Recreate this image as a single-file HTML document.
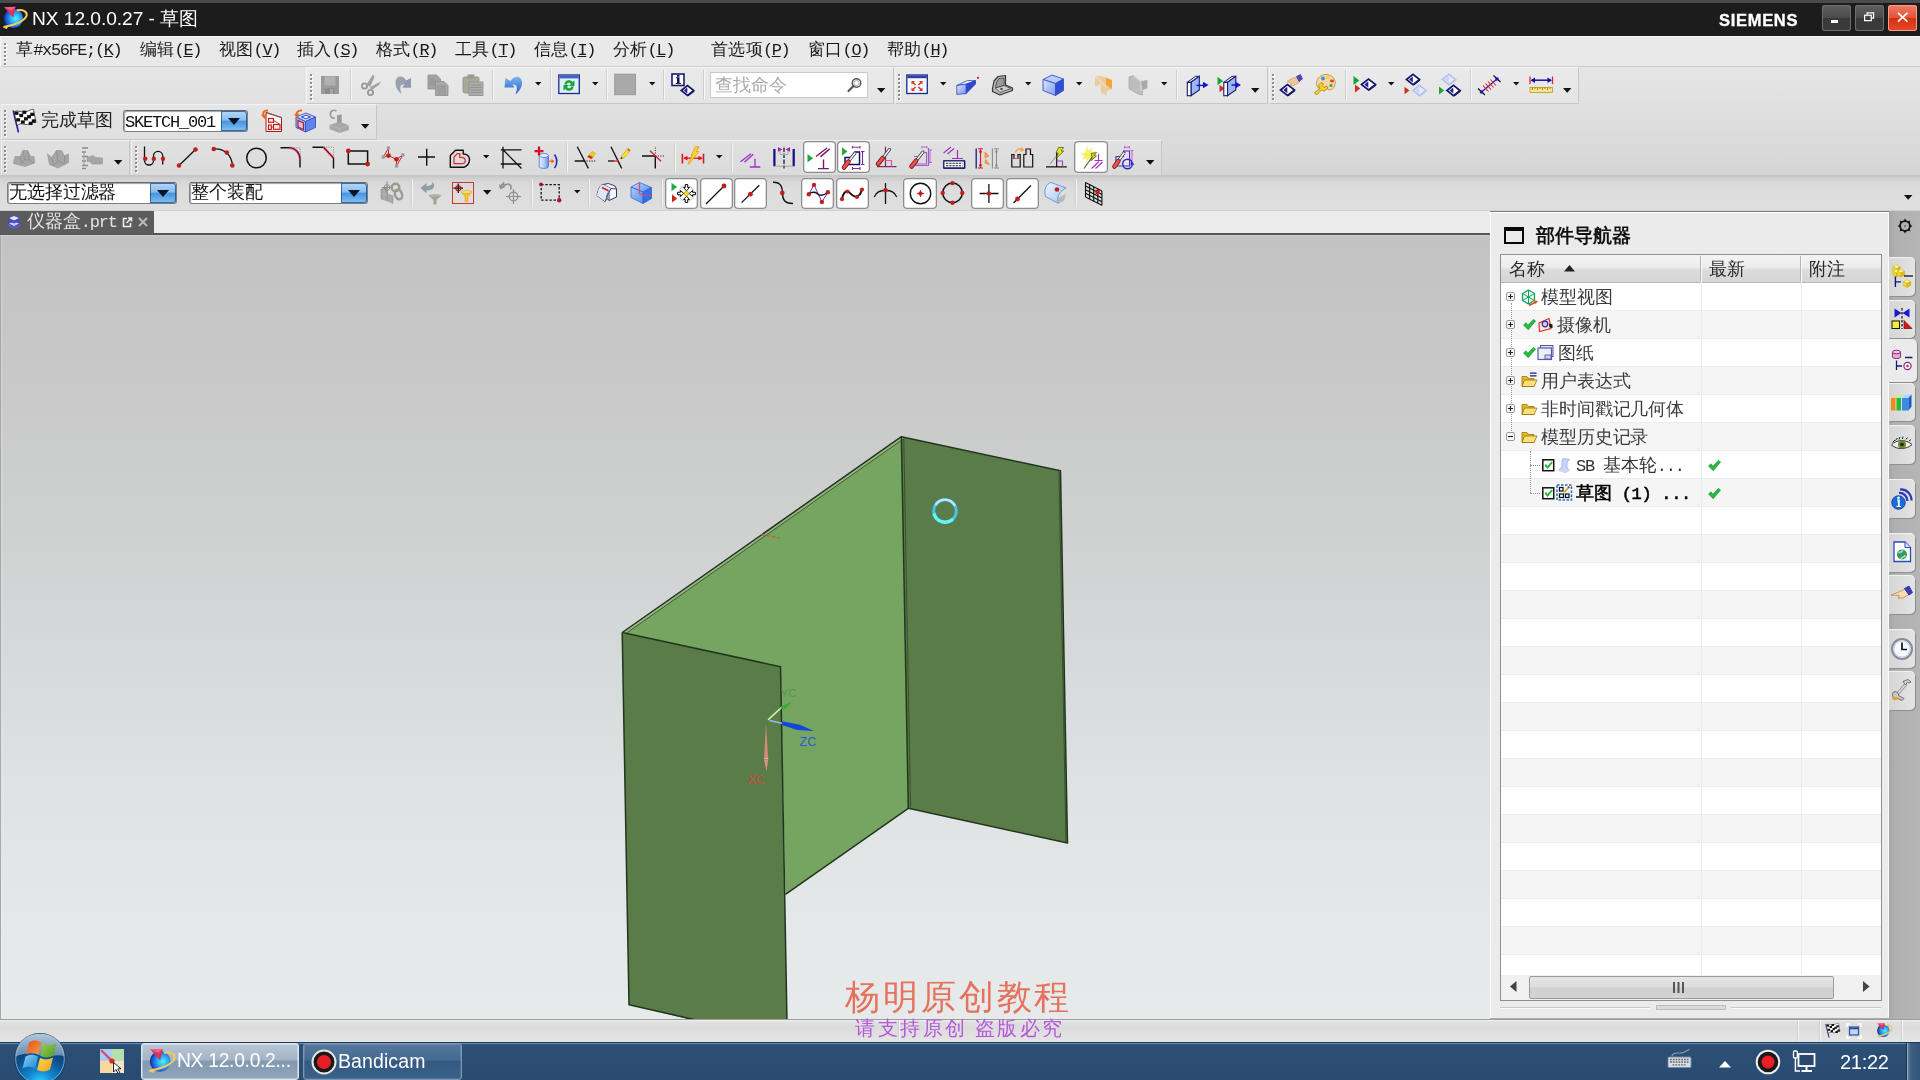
<!DOCTYPE html>
<html><head><meta charset="utf-8"><title>NX 12.0.0.27</title><style>
html,body{margin:0;padding:0}
body{width:1920px;height:1080px;overflow:hidden;position:relative;background:#e6e6e6;font-family:"Liberation Sans",sans-serif}
.b{position:absolute}
.i{position:absolute;overflow:visible}
.t{position:absolute;white-space:nowrap;font-family:"Liberation Sans",sans-serif;will-change:transform}
.a{font-family:"Liberation Mono",monospace;font-size:17px;letter-spacing:-1.2px}
.m{font-size:17.35px;letter-spacing:.3px;line-height:20px;color:#1a1a1a}
.m .a{letter-spacing:-1.4px}
.tb{background:rgba(255,255,255,.16);box-shadow:1px 1px 0 #c6c6c6,inset 1px 1px 0 rgba(255,255,255,.55)}
.tg{background:#fff;border-radius:4px;box-shadow:inset 0 0 0 1.3px #8d8d8d}
.grip{width:4px;background:repeating-linear-gradient(#8e8e8e 0 2px,transparent 2px 4.03px) 0 0/2px 100% no-repeat,repeating-linear-gradient(transparent 0 1px,#fff 1px 3px,transparent 3px 4.03px) 1px 0/2px 100% no-repeat}
.cb{background:#fff;border:1px solid #74808f;border-top-color:#5e6a78;border-radius:3px;box-sizing:border-box;box-shadow:inset 1px 1px 1px #a2a2a2}
.cbb{left:auto;border-radius:0 3px 3px 0;background:linear-gradient(#b4d8f8,#86bef0 45%,#4a94e0 52%,#6cb4ee 85%,#8cc8f6);box-shadow:inset 0 0 0 1px rgba(30,60,110,.7);box-sizing:border-box}

.nv{position:absolute;white-space:nowrap;will-change:transform;font-size:17.8px;letter-spacing:-.12px;line-height:20px;color:#3c3c3c}
</style></head><body>
<div class="b " style="left:0px;top:0px;width:1920px;height:3px;background:#4b4b4e"></div>
<div class="b " style="left:0px;top:3px;width:1920px;height:32.5px;background:#1c1c1c"></div>
<div class="b " style="left:0px;top:35.5px;width:1920px;height:31px;background:#e9e9e9"></div>
<div class="b " style="left:0px;top:66px;width:1920px;height:1px;background:#cdcdcd"></div>
<div class="b " style="left:0px;top:35.7px;width:1920px;height:1.5px;background:#fbfbfb"></div>
<div class="b " style="left:0px;top:36px;width:1px;height:175px;background:#f4f4f4"></div>
<div class="b " style="left:0px;top:67px;width:1920px;height:109px;background:linear-gradient(#e6e6e6,#d5d5d5)"></div>
<div class="b " style="left:0px;top:175px;width:1920px;height:36px;background:linear-gradient(#c0c0c0 0,#cfcfcf 8%,#d8d8d8 20%,#dcdcdc 40%,#dfdfdf 100%)"></div>
<div class="b " style="left:0px;top:210px;width:1920px;height:1px;background:#d0d0d0"></div>
<div class="b " style="left:0px;top:211px;width:1490px;height:22.5px;background:#ececec"></div>
<div class="b " style="left:0px;top:233px;width:1490px;height:1.8px;background:#565656"></div>
<div class="b " style="left:0px;top:234.8px;width:1490px;height:1.2px;background:#cdcdcd"></div>
<svg class="i" style="left:2px;top:5px" width="26" height="26" viewBox="0 0 26 26"><defs><radialGradient id="nxg" cx=".62" cy=".5" r=".62"><stop offset="0" stop-color="#4af4ff"/><stop offset=".45" stop-color="#2aa8f0"/><stop offset=".8" stop-color="#1a56d8"/><stop offset="1" stop-color="#0c2a80"/></radialGradient></defs><circle cx="11.300" cy="13.400" r="9.600" fill="url(#nxg)"/><path d="M15.500 5.200C21 4.500 25.500 6.500 24.600 10.500C23 16 12 20.500 2.500 21.800" fill="none" stroke="#f2c860" stroke-width="2.100" stroke-linecap="round"/><path d="M1.500 22.300L5.500 21.200L4.800 23.500Z" fill="#f2c860" stroke="#f2c860" stroke-width="1"/><path d="M2 2.200L13.600 1.800L11.400 12.600Z" fill="#e0305c"/><path d="M2 2.200L13.600 1.800L9.500 5.500Z" fill="#f0608a"/></svg>
<div class="t" style="left:32px;top:6.5px;color:#fff;font-size:19.2px;line-height:24px;letter-spacing:-.06px">NX 12.0.0.27 - 草图</div>
<div class="t" style="left:1718.5px;top:11.2px;color:#fff;font-size:16.5px;line-height:18px;font-weight:bold;letter-spacing:.7px;-webkit-text-stroke:.35px #fff">SIEMENS</div>
<div class="b " style="left:1822px;top:4.5px;width:29px;height:26px;background:linear-gradient(#606060,#4a4a4a 48%,#383838 52%,#3c3c3c);border-radius:3px;box-shadow:inset 0 0 0 1px #6d6d6d"></div>
<div class="b " style="left:1855px;top:4.5px;width:29px;height:26px;background:linear-gradient(#606060,#4a4a4a 48%,#383838 52%,#3c3c3c);border-radius:3px;box-shadow:inset 0 0 0 1px #6d6d6d"></div>
<div class="b " style="left:1888px;top:4.5px;width:29px;height:26px;background:linear-gradient(#ee7d63,#e2543a 48%,#d9310f 52%,#e24a2a);border-radius:3px;box-shadow:inset 0 0 0 1px #f0a090"></div>
<div class="b " style="left:1831px;top:19.6px;width:7.2px;height:3.8px;background:#fff"></div>
<svg class="i" style="left:1863.8px;top:12.2px" width="10.5" height="9.6" viewBox="0 0 12 11"><path d="M3.5 3.5V1H11V7H8.5" fill="none" stroke="#fff" stroke-width="1.3"/><rect x="0.7" y="3.7" width="7.6" height="6.2" fill="none" stroke="#fff" stroke-width="1.4"/></svg>
<svg class="i" style="left:1896.8px;top:12px" width="11.4" height="10.4" viewBox="0 0 13 12"><path d="M1 1L12 11M12 1L1 11" stroke="#fff" stroke-width="2"/></svg>
<div class="b grip" style="left:4px;top:42.8px;height:23.18px"></div>
<div class="t m" style="left:16px;top:39.4px;">草<span class="a">#x56FE;(</span><span class="a"><u>K</u></span><span class="a">)</span></div>
<div class="t m" style="left:140px;top:39.4px;">编辑<span class="a">(</span><span class="a"><u>E</u></span><span class="a">)</span></div>
<div class="t m" style="left:218.5px;top:39.4px;">视图<span class="a">(</span><span class="a"><u>V</u></span><span class="a">)</span></div>
<div class="t m" style="left:297px;top:39.4px;">插入<span class="a">(</span><span class="a"><u>S</u></span><span class="a">)</span></div>
<div class="t m" style="left:376px;top:39.4px;">格式<span class="a">(</span><span class="a"><u>R</u></span><span class="a">)</span></div>
<div class="t m" style="left:455px;top:39.4px;">工具<span class="a">(</span><span class="a"><u>T</u></span><span class="a">)</span></div>
<div class="t m" style="left:534px;top:39.4px;">信息<span class="a">(</span><span class="a"><u>I</u></span><span class="a">)</span></div>
<div class="t m" style="left:613px;top:39.4px;">分析<span class="a">(</span><span class="a"><u>L</u></span><span class="a">)</span></div>
<div class="t m" style="left:711px;top:39.4px;">首选项<span class="a">(</span><span class="a"><u>P</u></span><span class="a">)</span></div>
<div class="t m" style="left:808px;top:39.4px;">窗口<span class="a">(</span><span class="a"><u>O</u></span><span class="a">)</span></div>
<div class="t m" style="left:887px;top:39.4px;">帮助<span class="a">(</span><span class="a"><u>H</u></span><span class="a">)</span></div>
<div class="b tb" style="left:306px;top:67px;width:587px;height:36px;"></div>
<div class="b grip" style="left:310px;top:73.9px;height:27.21px"></div>
<svg class="i" style="left:318px;top:73px" width="24" height="24" viewBox="0 0 24 24"><rect x="3" y="3" width="18" height="18" fill="#9a9a9a"/><rect x="6.5" y="3.5" width="11" height="9" fill="#b1b1b1"/><rect x="7" y="15" width="9.5" height="6" fill="#8c8c8c"/><rect x="12" y="16" width="3" height="5" fill="#a5a5a5"/></svg>
<div class="b " style="left:350px;top:70px;width:1px;height:30px;background:#cecece"></div>
<div class="b " style="left:351px;top:70px;width:1px;height:30px;background:#f6f6f6"></div>
<svg class="i" style="left:358px;top:73px" width="24" height="24" viewBox="0 0 24 24"><circle cx="6.5" cy="13" r="2.6" fill="none" stroke="#979797" stroke-width="1.8"/><circle cx="12.5" cy="19.5" r="2.6" fill="none" stroke="#979797" stroke-width="1.8"/><path d="M8.5 11.5L15 1.5L16.5 4L12 14Z" fill="#a2a2a2"/><path d="M13 17.5L12 14L23 8.5L21 12Z" fill="#a2a2a2"/></svg>
<svg class="i" style="left:392px;top:73px" width="24" height="24" viewBox="0 0 24 24"><path d="M14.5 7.5C10 1 4 3 3.5 9C3 14 6.500 18.500 9.500 21C8 16 7 11 12.500 11.500L10.500 14.500L19 14.500L19 5Z" fill="#9aa0ac"/><path d="M12.500 11.500L10.500 14.500L19 14.500L19 5L14.500 7.500Z" fill="#8f98b5"/></svg>
<svg class="i" style="left:426px;top:73px" width="24" height="24" viewBox="0 0 24 24"><path d="M2 2H10.500L14.500 6V16H2Z" fill="#a3a3a3" stroke="#8e8e8e" stroke-width=".8"/><path d="M9.500 8.500H18L22 12.500V22.500H9.500Z" fill="#a9a9a9" stroke="#8e8e8e" stroke-width=".8"/><path d="M11 13H20M11 15H20M11 17H20M11 19H20M11 21H20M3.500 6H9M3.500 8H9M3.500 10H9M3.500 12H9" stroke="#8d8d8d" stroke-width=".8"/></svg>
<svg class="i" style="left:460.5px;top:73px" width="24" height="24" viewBox="0 0 24 24"><rect x="2" y="4" width="16" height="16" rx="1.500" fill="#a8a996" stroke="#919181" stroke-width=".8"/><rect x="6.500" y="1.500" width="7" height="4" fill="#9a9a9a"/><rect x="8" y="9" width="14" height="13.500" fill="#adadad" stroke="#8e8e8e" stroke-width=".8"/><path d="M9.500 12H20.500M9.500 14.500H20.500M9.500 17H20.500M9.500 19.500H20.500" stroke="#8d8d8d" stroke-width=".9"/></svg>
<div class="b " style="left:492px;top:70px;width:1px;height:30px;background:#cecece"></div>
<div class="b " style="left:493px;top:70px;width:1px;height:30px;background:#f6f6f6"></div>
<svg class="i" style="left:500.5px;top:73px" width="24" height="24" viewBox="0 0 24 24"><defs><linearGradient id="ug" x1="0" y1="0" x2="0" y2="1"><stop offset="0" stop-color="#7db4f2"/><stop offset="1" stop-color="#1f5fc2"/></linearGradient></defs><path d="M9.500 8C14 1.500 20.500 3 21 9C21.500 14 18 18.500 14.500 21.500C16 16.500 17.500 11.500 11.500 11.500L13.500 14.500H3.500L4.500 5Z" fill="url(#ug)"/></svg>
<svg class="i" style="left:535.3px;top:82.2px" width="7" height="4" viewBox="0 0 7 4"><path d="M0 0H6.400L3.200 3.600Z" fill="#111"/></svg>
<div class="b " style="left:550px;top:70px;width:1px;height:30px;background:#cecece"></div>
<div class="b " style="left:551px;top:70px;width:1px;height:30px;background:#f6f6f6"></div>
<svg class="i" style="left:556.5px;top:73px" width="24" height="24" viewBox="0 0 24 24"><rect x="1.800" y="2" width="20.500" height="18.500" fill="#dff0fb" stroke="#1c2a90" stroke-width="1.300"/><rect x="2.400" y="2.600" width="19.300" height="2.800" fill="#3f62c8"/><path d="M7.500 11.500C7.500 6.500 14 6 15.500 9L17.500 7.500V13H12L14 11C12.500 9 9.800 9.500 10 11.500Z" fill="#19a534"/><path d="M16.500 13.500C16.500 18.500 10 19 8.500 16L6.500 17.500V12H12L10 14C11.500 16 14.200 15.500 14 13.500Z" fill="#19a534"/></svg>
<svg class="i" style="left:591.8px;top:82.2px" width="7" height="4" viewBox="0 0 7 4"><path d="M0 0H6.400L3.200 3.600Z" fill="#111"/></svg>
<div class="b " style="left:606px;top:70px;width:1px;height:30px;background:#cecece"></div>
<div class="b " style="left:607px;top:70px;width:1px;height:30px;background:#f6f6f6"></div>
<svg class="i" style="left:613px;top:73px" width="24" height="24" viewBox="0 0 24 24"><rect x="1.700" y="1.200" width="20.800" height="20.500" fill="#a9a9a9" stroke="#9a9a9a" stroke-width="1"/></svg>
<svg class="i" style="left:649.3px;top:82.2px" width="7" height="4" viewBox="0 0 7 4"><path d="M0 0H6.400L3.200 3.600Z" fill="#111"/></svg>
<div class="b " style="left:663px;top:70px;width:1px;height:30px;background:#cecece"></div>
<div class="b " style="left:664px;top:70px;width:1px;height:30px;background:#f6f6f6"></div>
<svg class="i" style="left:670.5px;top:73px" width="24" height="24" viewBox="0 0 24 24"><rect x="1" y="1" width="12" height="11.500" fill="#fff" stroke="#1a1a6e" stroke-width="1.600"/><path d="M5 4.300H8.500V10H9.800V11H4.800V10H6V5.300H5Z" fill="#101060"/><rect x="6" y="2" width="2.500" height="1.700" fill="#101060"/><path d="M11.2 18.4L17.4 13.564L23.6 18.4L17.4 23.236Z" fill="#15156a"/><path d="M10.3 17.5L16.5 12.664L22.7 17.5L16.5 22.336Z" fill="#ffffff" stroke="#15156a" stroke-width="1.700"/><path d="M12.78 17.5L16.3 14.5984L16.3 20.4016Z" fill="#23238e"/></svg>
<div class="b " style="left:703px;top:70px;width:1px;height:30px;background:#cecece"></div>
<div class="b " style="left:704px;top:70px;width:1px;height:30px;background:#f6f6f6"></div>
<div class="b " style="left:710px;top:72px;width:158px;height:25.5px;background:#fff;border:1px solid #c9c9c9;box-sizing:border-box"></div>
<div class="t" style="left:715px;top:75.5px;color:#aaa;font-size:17.8px;letter-spacing:-.12px;line-height:19px">查找命令</div>
<svg class="i" style="left:847px;top:76.5px" width="16" height="16" viewBox="0 0 16 16"><circle cx="9.500" cy="6" r="4.300" fill="none" stroke="#555" stroke-width="1.400"/><circle cx="9.500" cy="6" r="2.600" fill="none" stroke="#999" stroke-width=".8"/><path d="M6.500 9L1.500 14" stroke="#555" stroke-width="2.200" stroke-linecap="round"/></svg>
<svg class="i" style="left:876.8px;top:87.9px" width="8.4" height="4.700" viewBox="0 0 9 5"><path d="M0 0H9L4.500 5Z" fill="#111"/></svg>
<div class="b tb" style="left:895px;top:67px;width:372px;height:36px;"></div>
<div class="b grip" style="left:898px;top:73.9px;height:27.21px"></div>
<svg class="i" style="left:904.5px;top:73px" width="24" height="24" viewBox="0 0 24 24"><rect x="1.800" y="2" width="20.500" height="18.500" fill="#f4f7ff" stroke="#1c2a90" stroke-width="1.300"/><rect x="2.400" y="2.600" width="19.300" height="2.600" fill="#2c3f9c"/><path d="M6.500 8H10L6.500 11.500Z M17.500 8H14L17.500 11.500Z M6.500 18H10L6.500 14.500Z M17.500 18H14L17.500 14.500Z" fill="#d33a1a"/><path d="M7.500 9L10.500 12M16.500 9L13.500 12M7.500 17L10.500 14M16.500 17L13.500 14" stroke="#d33a1a" stroke-width="1.500"/></svg>
<svg class="i" style="left:939.8px;top:82.2px" width="7" height="4" viewBox="0 0 7 4"><path d="M0 0H6.400L3.200 3.600Z" fill="#111"/></svg>
<svg class="i" style="left:954px;top:73px" width="24" height="24" viewBox="0 0 24 24"><defs><linearGradient id="bb" x1="0" y1="0" x2="1" y2="1"><stop offset="0" stop-color="#e4ecff"/><stop offset="1" stop-color="#6f8ff0"/></linearGradient></defs><path d="M2.800 12.500L13.500 7.500L21.500 7.700L12.100 11.200Z" fill="#eef3ff" stroke="#2c45b8" stroke-width=".8" stroke-linejoin="round"/><path d="M12.100 11.200L21.500 7.700V11L12.100 20.600Z" fill="#2f43d4" stroke="#2c45b8" stroke-width=".8" stroke-linejoin="round"/><path d="M2.800 12.500L12.100 11.200V20.600L2.800 21.400Z" fill="url(#bb)" stroke="#2c45b8" stroke-width=".8" stroke-linejoin="round"/><circle cx="24" cy="4.8" r="1.1" fill="#c01818"/></svg>
<svg class="i" style="left:989.5px;top:73px" width="24" height="24" viewBox="0 0 24 24"><path d="M2.500 15.500L4 8L8 3.500L15.500 2.500V12L22.500 15V17.500L10 22L2.500 18.500Z" fill="#b9b9b9" stroke="#333" stroke-width="1.200" stroke-linejoin="round"/><path d="M5.500 15L6.500 9L9 5.500L14 5V12.500Z" fill="#9b9b9b" stroke="#444" stroke-width=".8"/><path d="M5.500 15L14 12.500L21 15.500L10 19.500Z" fill="#d0d0d0" stroke="#444" stroke-width=".8"/><circle cx="11.500" cy="16" r="1.300" fill="#555"/></svg>
<svg class="i" style="left:1025.3px;top:82.2px" width="7" height="4" viewBox="0 0 7 4"><path d="M0 0H6.400L3.200 3.600Z" fill="#111"/></svg>
<svg class="i" style="left:1041px;top:73px" width="24" height="24" viewBox="0 0 24 24"><defs><linearGradient id="cu" x1="0" y1="0" x2="1" y2="1"><stop offset="0" stop-color="#dbe6ff"/><stop offset="1" stop-color="#7d9cf0"/></linearGradient></defs><path d="M2 6.500L11 2L22.500 6L14.500 10.500Z" fill="#b9ccff" stroke="#3452c8" stroke-width=".9"/><path d="M2 6.500L14.500 10.500V22.500L2 17.500Z" fill="url(#cu)" stroke="#3452c8" stroke-width=".9"/><path d="M14.500 10.500L22.500 6V17.500L14.500 22.500Z" fill="#2f4fd0" stroke="#3452c8" stroke-width=".9"/></svg>
<svg class="i" style="left:1075.8px;top:82.2px" width="7" height="4" viewBox="0 0 7 4"><path d="M0 0H6.400L3.200 3.600Z" fill="#111"/></svg>
<svg class="i" style="left:1092px;top:73px" width="24" height="24" viewBox="0 0 24 24"><path d="M3 4L8 2.500L20 7V16L14.500 18V22L9 20V11L3 13.500Z" fill="#f0c890" opacity=".9"/><path d="M8 2.500L20 7V16L14 12V5Z" fill="#f5a436"/><path d="M3 13.500L9 11V20L14.500 22V18" fill="none" stroke="#d9d9d9" stroke-width="1"/><path d="M4 4L14 14" stroke="#e6e0d0" stroke-width="1.200"/></svg>
<svg class="i" style="left:1126px;top:73px" width="24" height="24" viewBox="0 0 24 24"><path d="M3 4L7.500 2.500L15 8.500L21 7.500V15L16.500 16.500V22L12 21L3 15.500Z" fill="#bdbdbd" stroke="#a8a8a8" stroke-width=".8"/><path d="M7.500 2.500L15 8.500V18" fill="none" stroke="#dcdcdc" stroke-width="1.200"/><path d="M15 8.500L21 7.500V15L16.500 16.500Z" fill="#a9a9a9"/></svg>
<svg class="i" style="left:1160.8px;top:82.2px" width="7" height="4" viewBox="0 0 7 4"><path d="M0 0H6.400L3.200 3.600Z" fill="#111"/></svg>
<div class="b " style="left:1176px;top:70px;width:1px;height:30px;background:#cecece"></div>
<div class="b " style="left:1177px;top:70px;width:1px;height:30px;background:#f6f6f6"></div>
<svg class="i" style="left:1185px;top:73px" width="24" height="24" viewBox="0 0 24 24"><path d="M2.3 9.300L10.5 3.300H14.3L6 9.300Z" fill="#e8eefc" stroke="#1a1a6e" stroke-width="1"/><path d="M6 9.300L14.3 3.300V17L6 22.700Z" fill="#9db8f4" stroke="#1a1a6e" stroke-width="1.100"/><rect x="2.3" y="9.300" width="3.700" height="13.400" fill="#fff" stroke="#1a1a6e" stroke-width="1.100"/><path d="M11.500 12.400H20" stroke="#1515c8" stroke-width="1.500"/><path d="M18 8.800L23.500 12L18 15.200Z" fill="#1515c8"/></svg>
<svg class="i" style="left:1217px;top:73px" width="24" height="24" viewBox="0 0 24 24"><path d="M0.5 3.7L6.09 8L0.5 12.3Z" fill="#19a534"/><path d="M2.5 11.7L7.44 15.5L2.5 19.3Z" fill="#c8301c"/><path d="M6.8 9.300L15 3.300H18.8L10.5 9.300Z" fill="#e8eefc" stroke="#1a1a6e" stroke-width="1"/><path d="M10.5 9.300L18.8 3.300V17L10.5 22.700Z" fill="#9db8f4" stroke="#1a1a6e" stroke-width="1.100"/><rect x="6.8" y="9.300" width="3.700" height="13.400" fill="#fff" stroke="#1a1a6e" stroke-width="1.100"/><path d="M14.500 12H20" stroke="#1515c8" stroke-width="1.500"/><path d="M18.500 8.800L24 12L18.500 15.200Z" fill="#1515c8"/></svg>
<svg class="i" style="left:1251.3px;top:87.9px" width="8.4" height="4.700" viewBox="0 0 9 5"><path d="M0 0H9L4.500 5Z" fill="#111"/></svg>
<div class="b tb" style="left:1269px;top:67px;width:309px;height:36px;"></div>
<div class="b grip" style="left:1272px;top:73.9px;height:27.21px"></div>
<svg class="i" style="left:1279px;top:73px" width="24" height="24" viewBox="0 0 24 24"><path d="M8 8.500L14 5L18 4L20.500 9L15 12.500L11 12L12.500 10Z" fill="#f0c89c" stroke="#c89a64" stroke-width=".7"/><path d="M17.500 3.500L21.500 1.500L23.500 6L20 8.500Z" fill="#4a46c8" stroke="#2a2890" stroke-width=".6"/><path d="M2.4 17.9L9.4 12.44L16.4 17.9L9.4 23.36Z" fill="#15156a"/><path d="M1.5 17L8.5 11.54L15.5 17L8.5 22.46Z" fill="#ffffff" stroke="#15156a" stroke-width="1.700"/><path d="M4.3 17L8.3 13.724L8.3 20.276Z" fill="#23238e"/></svg>
<svg class="i" style="left:1312px;top:73px" width="24" height="24" viewBox="0 0 24 24"><path d="M12.500 1.500C20 1 24 6 23 11.500C22 17 17 18 15 15.500C13 13.500 11 16 8 15.500C2 14.500 3.500 3 12.500 1.500Z" fill="#f1d6a8" stroke="#c79a52" stroke-width="1"/><circle cx="11" cy="5.500" r="1.900" fill="#3f8fe0"/><circle cx="16" cy="4.500" r="1.700" fill="#f5d820"/><ellipse cx="20" cy="8" rx="2" ry="1.400" fill="#e0481c"/><circle cx="19" cy="12.500" r="1.600" fill="#32b040"/><path d="M2.500 19.500L8 15.500L6.500 12L10 9.500L11.500 11L10 12.500L12 14.500L14.500 13L16 15L12.500 18L9.500 17L4.500 22Z" fill="#f6d32c" stroke="#b8860b" stroke-width=".9"/></svg>
<div class="b " style="left:1345px;top:70px;width:1px;height:30px;background:#cecece"></div>
<div class="b " style="left:1346px;top:70px;width:1px;height:30px;background:#f6f6f6"></div>
<svg class="i" style="left:1352px;top:73px" width="24" height="24" viewBox="0 0 24 24"><path d="M1.5 3L7.35 7.5L1.5 12Z" fill="#19a534"/><path d="M3 11.5L8.2 15.5L3 19.5Z" fill="#c8301c"/><path d="M10.4 12.4L17.4 6.94L24.4 12.4L17.4 17.86Z" fill="#15156a"/><path d="M9.5 11.5L16.5 6.04L23.5 11.5L16.5 16.96Z" fill="#ffffff" stroke="#15156a" stroke-width="1.700"/><path d="M12.3 11.5L16.3 8.224L16.3 14.776Z" fill="#23238e"/></svg>
<svg class="i" style="left:1388.3px;top:82.2px" width="7" height="4" viewBox="0 0 7 4"><path d="M0 0H6.400L3.200 3.600Z" fill="#111"/></svg>
<svg class="i" style="left:1403px;top:73px" width="24" height="24" viewBox="0 0 24 24"><path d="M4.4 7.4L10.9 2.33L17.4 7.4L10.9 12.47Z" fill="#15156a"/><path d="M3.5 6.5L10 1.43L16.5 6.5L10 11.57Z" fill="#ffffff" stroke="#15156a" stroke-width="1.700"/><path d="M6.1 6.5L9.8 3.458L9.8 9.542Z" fill="#23238e"/><path d="M1.5 13.7L6.44 17.5L1.5 21.3Z" fill="#c8301c"/><path d="M10.9 18.4L17.4 13.33L23.9 18.4L17.4 23.47Z" fill="#c9d4f6"/><path d="M10 17.5L16.5 12.43L23 17.5L16.5 22.57Z" fill="#e6ecfd" stroke="#b4c2f0" stroke-width="1.700"/><path d="M12.6 17.5L16.3 14.458L16.3 20.542Z" fill="#c3d0f6"/></svg>
<svg class="i" style="left:1438px;top:73px" width="24" height="24" viewBox="0 0 24 24"><path d="M5.4 7.4L11.9 2.33L18.4 7.4L11.9 12.47Z" fill="#c9d4f6"/><path d="M4.5 6.5L11 1.43L17.5 6.5L11 11.57Z" fill="#e6ecfd" stroke="#b4c2f0" stroke-width="1.700"/><path d="M7.1 6.5L10.8 3.458L10.8 9.542Z" fill="#c3d0f6"/><path d="M1 13.5L6.2 17.5L1 21.5Z" fill="#19a534"/><path d="M9.9 18.4L16.4 13.33L22.9 18.4L16.4 23.47Z" fill="#15156a"/><path d="M9 17.5L15.5 12.43L22 17.5L15.5 22.57Z" fill="#ffffff" stroke="#15156a" stroke-width="1.700"/><path d="M11.6 17.5L15.3 14.458L15.3 20.542Z" fill="#23238e"/></svg>
<div class="b " style="left:1470px;top:70px;width:1px;height:30px;background:#cecece"></div>
<div class="b " style="left:1471px;top:70px;width:1px;height:30px;background:#f6f6f6"></div>
<svg class="i" style="left:1477px;top:73px" width="24" height="24" viewBox="0 0 24 24"><path d="M1 15.500L8 22M16.500 2.500L23.500 9" stroke="#111" stroke-width="1.200"/><path d="M4.500 19L20 6" stroke="#1a1ac0" stroke-width="1.200"/><path d="M6 12.500L11.500 18.500M8.500 10.500L14 16.500M11 8.500L16.500 14.500M13.500 6.500L19 12.500" stroke="#e02020" stroke-width="1.100"/><circle cx="4.5" cy="19" r="1.8" fill="#1a1ac0"/><circle cx="20" cy="6" r="1.8" fill="#1a1ac0"/></svg>
<svg class="i" style="left:1513.3px;top:82.2px" width="7" height="4" viewBox="0 0 7 4"><path d="M0 0H6.400L3.200 3.600Z" fill="#111"/></svg>
<svg class="i" style="left:1528.5px;top:73px" width="24" height="24" viewBox="0 0 24 24"><path d="M1 3.500V11M23.500 3.500V11" stroke="#e0203a" stroke-width="1.300"/><path d="M3 7.200H21.500" stroke="#10109a" stroke-width="1.500"/><path d="M1.500 7.200L6 4.500V10ZM23 7.200L18.500 4.500V10Z" fill="#10109a"/><rect x="1" y="14.500" width="22.500" height="5" fill="#f5e58a" stroke="#b89a20" stroke-width=".8"/><path d="M3.500 14.500V17M6 14.500V16M8.500 14.500V17M11 14.500V16M13.500 14.500V17M16 14.500V16M18.500 14.500V17M21 14.500V16" stroke="#8a7010" stroke-width=".8"/></svg>
<svg class="i" style="left:1563.3px;top:87.9px" width="8.4" height="4.700" viewBox="0 0 9 5"><path d="M0 0H9L4.500 5Z" fill="#111"/></svg>
<div class="b tb" style="left:1px;top:104px;width:375px;height:35px;"></div>
<div class="b grip" style="left:4.4px;top:109.6px;height:27.21px"></div>
<svg class="i" style="left:11.5px;top:109px" width="24" height="24" viewBox="0 0 24 24"><path d="M1.200 1.500L6.500 23.500" stroke="#2a2aa0" stroke-width="1.700"/><path d="M2 3C6 .2 10 4.500 15 2.500S20 0 21.500 .5L24 13.500C21 12.500 19 15 15.500 15.500S9 13 5.200 16.500Z" fill="#fff" stroke="#111" stroke-width=".7"/><rect x="2.6" y="2.6" width="3.900" height="3.300" fill="#111"/><rect x="10.4" y="1.6" width="3.900" height="3.300" fill="#111"/><rect x="18.2" y="3.7" width="3.900" height="3.300" fill="#111"/><rect x="7.3" y="4.8" width="3.900" height="3.300" fill="#111"/><rect x="15.1" y="6.1" width="3.900" height="3.300" fill="#111"/><rect x="4.2" y="9.2" width="3.900" height="3.300" fill="#111"/><rect x="12.0" y="8.2" width="3.900" height="3.300" fill="#111"/><rect x="19.8" y="10.3" width="3.900" height="3.300" fill="#111"/><rect x="8.9" y="11.4" width="3.900" height="3.300" fill="#111"/><rect x="16.7" y="12.7" width="3.900" height="3.300" fill="#111"/></svg>
<div class="t" style="left:40.5px;top:109.7px;font-size:17.8px;letter-spacing:-.12px;line-height:20px;color:#222">完成草图</div>
<div class="b cb" style="left:123px;top:109.5px;width:124.5px;height:22.5px;"></div>
<div class="b cbb" style="left:220.5px;top:110.5px;width:26px;height:20.5px;"></div>
<svg class="i" style="left:227.5px;top:117.75px" width="12" height="7" viewBox="0 0 12 7"><path d="M0 0H12L6 7Z" fill="#0a1422"/></svg>
<div class="t" style="left:125px;top:111.5px;font-size:17.8px;letter-spacing:-.12px;line-height:19px;color:#111"><span class="a">SKETCH_001</span></div>
<svg class="i" style="left:260px;top:109px" width="24" height="24" viewBox="0 0 24 24"><path d="M6 3.500L21.500 8.500V22.500H6Z" fill="#f6f6f6" stroke="#b01818" stroke-width="1"/><path d="M6 3.500L21.500 8.500" stroke="#555" stroke-width=".8" fill="none"/><rect x="8.500" y="9.500" width="5" height="3.800" fill="#fbe4e4" stroke="#c01818" stroke-width="1.100"/><rect x="8.500" y="16" width="2.800" height="4.500" fill="#fbe4e4" stroke="#c01818" stroke-width="1.100"/><rect x="13.500" y="15.500" width="6.500" height="4.800" fill="#fbe4e4" stroke="#c01818" stroke-width="1.100"/><path d="M13.500 11.500L20 15.500M11.300 18H13.500" stroke="#c01818" stroke-width=".9" fill="none"/><path d="M8 1.500C4.500 1 2 3.500 3.500 7" fill="none" stroke="#ee6a1a" stroke-width="2"/><path d="M1 6L5 10.500L7 5.500Z" fill="#ee6a1a"/></svg>
<svg class="i" style="left:293px;top:109px" width="24" height="24" viewBox="0 0 24 24"><path d="M3 8L13 4L22.500 8L12.500 12.500Z" fill="#c8d8ff" stroke="#3452c8" stroke-width=".9"/><path d="M3 8L12.500 12.500V23L3 18.500Z" fill="#9ab6f8" stroke="#3452c8" stroke-width=".9"/><path d="M12.500 12.500L22.500 8V18.500L12.500 23Z" fill="#5f84ee" stroke="#3452c8" stroke-width=".9"/><path d="M5 11.500L10.500 14V20.500L5 18Z" fill="#c9c2f4" stroke="#c81818" stroke-width="1.200"/><path d="M8.500 8L13 6.300L17.500 8L13 9.800Z" fill="#fff" stroke="#2a2ab0" stroke-width=".9"/><path d="M9 1.500C5.500 1 2.500 3.500 3.500 6.500" fill="none" stroke="#ee6a1a" stroke-width="2"/><path d="M1 5.500L4.500 9.500L6.500 4.500Z" fill="#ee6a1a"/></svg>
<svg class="i" style="left:325.5px;top:109px" width="24" height="24" viewBox="0 0 24 24"><path d="M3.500 16L11 13.500V6.500L15.500 5.500V13.500L19 14.500L23 17V21L13.500 24L3.500 20Z" fill="#a8a8a8"/><path d="M11 6.500L15.500 5.500V13.500L11 13.500Z" fill="#9a9a9a"/><path d="M3.500 16L13.500 19.500L23 17M13.500 19.500V24" fill="none" stroke="#bdbdbd" stroke-width=".8"/><path d="M10.500 2C7 0 3.500 2.500 4.500 6.500C5 8.500 7 9.500 9 9" fill="none" stroke="#9c9c9c" stroke-width="1.700"/></svg>
<svg class="i" style="left:361.3px;top:123.9px" width="8.4" height="4.700" viewBox="0 0 9 5"><path d="M0 0H9L4.500 5Z" fill="#111"/></svg>
<div class="b tb" style="left:1px;top:140px;width:128px;height:35px;"></div>
<div class="b grip" style="left:4.4px;top:146px;height:27.21px"></div>
<svg class="i" style="left:12px;top:145.5px" width="24" height="24" viewBox="0 0 24 24"><path d="M1.500 17.500L3 10.500H8L11 4.500H15.500L18.500 10.500H22L22.500 17L13 20.500Z" fill="#a6a6a6" stroke="#979797" stroke-width=".7"/><path d="M8 10.500L10 17.500M15.500 4.500L17 14M11 4.500L12.500 13.500L10 17.500M12.500 13.500L17 14L22.500 17" fill="none" stroke="#8e8e8e" stroke-width=".8"/></svg>
<svg class="i" style="left:46px;top:145.5px" width="24" height="24" viewBox="0 0 24 24"><path d="M1.500 8L5.500 11.500L10.500 4.500H15.500L18.500 10L22.500 8V16.500L12 22L3.500 18.500Z" fill="#a6a6a6" stroke="#979797" stroke-width=".7"/><path d="M5.500 11.500L7.500 19.500M10.500 4.500L12 15.500L7.500 19.500M12 15.500L18.500 17.500V10" fill="none" stroke="#8c8c8c" stroke-width=".8"/></svg>
<svg class="i" style="left:80px;top:145.5px" width="24" height="24" viewBox="0 0 24 24"><path d="M2 2H8M2 6H6M2 10.500H8M2 15H6M2 19.500H8M2 22.500H6" stroke="#8c8c8c" stroke-width="1.600"/><path d="M4 6V19" stroke="#a0a0a0" stroke-width="1"/><path d="M7 11.500L13 9.500L15.500 11.500L22.500 12V18H12L9.500 15.500H7Z" fill="#a6a6a6" stroke="#979797" stroke-width=".6"/></svg>
<svg class="i" style="left:113.8px;top:159.9px" width="8.4" height="4.700" viewBox="0 0 9 5"><path d="M0 0H9L4.500 5Z" fill="#111"/></svg>
<div class="b tb" style="left:131px;top:140px;width:1030px;height:35px;"></div>
<div class="b grip" style="left:135px;top:146px;height:27.21px"></div>
<svg class="i" style="left:142px;top:145.5px" width="24" height="24" viewBox="0 0 24 24"><path d="M2.500 .5V14.500A4.500 4.500 0 0 0 11.500 14.500V10A4.600 4.600 0 0 1 20.700 10V18.500" fill="none" stroke="#111" stroke-width="1.3" /><circle cx="3.2" cy="12.7" r="2.2" fill="#c0201c"/><circle cx="11.8" cy="12.7" r="2.2" fill="#c0201c"/><circle cx="21" cy="12.7" r="2.2" fill="#c0201c"/></svg>
<svg class="i" style="left:176px;top:145.5px" width="24" height="24" viewBox="0 0 24 24"><path d="M3 19.500L19.500 3.500" fill="none" stroke="#111" stroke-width="1.3" /><circle cx="3" cy="19.5" r="2.3" fill="#c0201c"/><circle cx="19.5" cy="3.5" r="2.3" fill="#c0201c"/></svg>
<svg class="i" style="left:210.5px;top:145.5px" width="24" height="24" viewBox="0 0 24 24"><path d="M2.500 3C13 2 21 9 21.500 20" fill="none" stroke="#111" stroke-width="1.3" /><circle cx="2.8" cy="3" r="2.3" fill="#c0201c"/><circle cx="15.8" cy="6.5" r="2.3" fill="#c0201c"/><circle cx="21.3" cy="19.5" r="2.3" fill="#c0201c"/></svg>
<svg class="i" style="left:244px;top:145.5px" width="24" height="24" viewBox="0 0 24 24"><circle cx="12.500" cy="12" r="9.800" fill="none" stroke="#111" stroke-width="1.500"/></svg>
<svg class="i" style="left:278.5px;top:145.5px" width="24" height="24" viewBox="0 0 24 24"><path d="M10 1.800H21V13" fill="none" stroke="#888" stroke-width="0.9" stroke-dasharray="1.200 1.200"/><path d="M1.500 1.800H10M21 13V21.500" fill="none" stroke="#111" stroke-width="1.4" /><path d="M10 1.800A11 11.200 0 0 1 21 13" fill="none" stroke="#f0708c" stroke-width="2.4" /><path d="M10 1.800A11 11.200 0 0 1 21 13" fill="none" stroke="#4a1020" stroke-width="1.1" /></svg>
<svg class="i" style="left:312px;top:145.5px" width="24" height="24" viewBox="0 0 24 24"><path d="M11.500 1.200H21.500V12" fill="none" stroke="#888" stroke-width="0.9" stroke-dasharray="1.200 1.200"/><path d="M.5 1.200H11.500M21.500 12V22.500" fill="none" stroke="#111" stroke-width="1.4" /><path d="M11.500 1.200L21.500 12" fill="none" stroke="#f0607a" stroke-width="2.4" /><path d="M11.500 1.200L21.500 12" fill="none" stroke="#5a1018" stroke-width="1.1" /></svg>
<svg class="i" style="left:346px;top:145.5px" width="24" height="24" viewBox="0 0 24 24"><rect x="2.300" y="5" width="19.300" height="13" fill="none" stroke="#111" stroke-width="1.500"/><circle cx="2.3" cy="5" r="2.4" fill="#c0201c"/><circle cx="21.6" cy="18" r="2.4" fill="#c0201c"/></svg>
<svg class="i" style="left:380.5px;top:145.5px" width="24" height="24" viewBox="0 0 24 24"><path d="M7.500 2L2.300 11L7.500 9.600ZM15.500 13.300L21.800 9L15.500 20ZM7.500 9.600L15.500 13.300" fill="none" stroke="#d82020" stroke-width="1" /><circle cx="7.5" cy="2" r="1.9" fill="#a0a0a0"/><circle cx="2.3" cy="11" r="1.9" fill="#a0a0a0"/><circle cx="21.8" cy="9" r="1.9" fill="#a0a0a0"/><circle cx="15.5" cy="20" r="1.9" fill="#a0a0a0"/><circle cx="7.5" cy="9.6" r="2.3" fill="#c0201c"/><circle cx="15.5" cy="13.3" r="2.3" fill="#c0201c"/></svg>
<svg class="i" style="left:414px;top:145.5px" width="24" height="24" viewBox="0 0 24 24"><path d="M4 11H21M12.700 2.800V19.800" fill="none" stroke="#111" stroke-width="1.4" /></svg>
<svg class="i" style="left:448px;top:145.5px" width="24" height="24" viewBox="0 0 24 24"><path d="M2.300 21.300V9.500L7.500 4.200H15.200V8C24 8 23 18.500 16 21.300Z" fill="none" stroke="#111" stroke-width="1.4" stroke-linejoin="round"/><path d="M6 17.700V11L9.300 7.700H11.800V11.500C18.500 10.500 18.500 16.500 14.500 17.700Z" fill="none" stroke="#e02828" stroke-width="1.2" /></svg>
<svg class="i" style="left:482.8px;top:155.2px" width="7" height="4" viewBox="0 0 7 4"><path d="M0 0H6.400L3.200 3.600Z" fill="#111"/></svg>
<svg class="i" style="left:498.5px;top:145.5px" width="24" height="24" viewBox="0 0 24 24"><path d="M4 .7V22.500M1.800 3.800H22.500M1.800 18H22.500M4 3.800L22.500 22.500" fill="none" stroke="#111" stroke-width="1.3" /></svg>
<svg class="i" style="left:534px;top:145.5px" width="24" height="24" viewBox="0 0 24 24"><defs><linearGradient id="cy" x1="0" y1="0" x2="1" y2="0"><stop offset="0" stop-color="#e8f1ff"/><stop offset=".5" stop-color="#b7cffa"/><stop offset="1" stop-color="#5f8be6"/></linearGradient></defs><path d="M5.200 9.500V20.500C5.200 23 14.500 23 14.500 20.500V9.500Z" fill="url(#cy)" stroke="#4a6fd0" stroke-width=".8"/><ellipse cx="9.850" cy="9.500" rx="4.650" ry="2" fill="#e4eeff" stroke="#4a6fd0" stroke-width=".8"/><path d="M.5 5.100H9.500M5 .6V9.600" stroke="#d01420" stroke-width="2.300"/><path d="M14 15.200H19" stroke="#ee6a1a" stroke-width="1.300"/><path d="M17.500 12.800L20.500 15.200L17.500 17.600Z" fill="#ee6a1a"/><path d="M20.500 8.500C23.500 13 23.500 18 20.500 22" fill="none" stroke="#2a2ab8" stroke-width="1.600"/></svg>
<div class="b " style="left:566px;top:143px;width:1px;height:29px;background:#cecece"></div>
<div class="b " style="left:567px;top:143px;width:1px;height:29px;background:#f6f6f6"></div>
<svg class="i" style="left:572.5px;top:145.5px" width="24" height="24" viewBox="0 0 24 24"><path d="M4.300 .7L15.400 22.400M1.700 15H11" fill="none" stroke="#111" stroke-width="1.3" /><path d="M11 15H22.500" fill="none" stroke="#111" stroke-width="1.2" stroke-dasharray="1.200 1.300"/><path d="M14.500 11L19 5.500L22.500 7.500L18.500 13Z" fill="#f2d21a" stroke="#c89a10" stroke-width=".6"/><path d="M14.500 11L16 9L20 11L18.500 13Z" fill="#d8301c"/></svg>
<svg class="i" style="left:607px;top:145.5px" width="24" height="24" viewBox="0 0 24 24"><path d="M4 .7L14.700 22.400" fill="none" stroke="#111" stroke-width="1.3" /><path d="M1 15H7" fill="none" stroke="#111" stroke-width="1.3" /><path d="M6 15H11.500" fill="none" stroke="#e02020" stroke-width="1.3" /><path d="M13.500 13L15 9.500L20 3.500L22.500 5.500L17.500 11.500Z" fill="#f5e23a" stroke="#b89a10" stroke-width=".6"/><path d="M20 3.500L21.200 2.300L23.500 4.300L22.500 5.500Z" fill="#e0501c"/><path d="M13.500 13L14.300 11L15.800 12.200Z" fill="#111"/></svg>
<svg class="i" style="left:641px;top:145.5px" width="24" height="24" viewBox="0 0 24 24"><path d="M14.300 10V.7M14.300 10H23" fill="none" stroke="#222" stroke-width="1.1" stroke-dasharray="1.100 1.400"/><path d="M1 10H14.300V22.400" fill="none" stroke="#111" stroke-width="1.4" /><path d="M9 4.700L20 15.300" fill="none" stroke="#d8203c" stroke-width="1.3" /></svg>
<div class="b " style="left:674px;top:143px;width:1px;height:29px;background:#cecece"></div>
<div class="b " style="left:675px;top:143px;width:1px;height:29px;background:#f6f6f6"></div>
<svg class="i" style="left:681px;top:145.5px" width="24" height="24" viewBox="0 0 24 24"><path d="M1.400 7.800V17.400M22.500 7.800V17.400" fill="none" stroke="#d81818" stroke-width="1.6" /><path d="M3 12.200H21" fill="none" stroke="#d81818" stroke-width="1.3" /><path d="M2.200 12.200L6.500 9.800V14.600ZM21.700 12.200L17.400 9.800V14.600Z" fill="#d81818"/><path d="M14.500 .7H18L15.500 5.500H18L8 18L6.700 18L11.500 9.300H10Z" fill="#f7d626" stroke="#ee8a1a" stroke-width=".7"/></svg>
<svg class="i" style="left:716.3px;top:155.2px" width="7" height="4" viewBox="0 0 7 4"><path d="M0 0H6.400L3.200 3.600Z" fill="#111"/></svg>
<div class="b " style="left:731px;top:143px;width:1px;height:29px;background:#cecece"></div>
<div class="b " style="left:732px;top:143px;width:1px;height:29px;background:#f6f6f6"></div>
<svg class="i" style="left:737.5px;top:145.5px" width="24" height="24" viewBox="0 0 24 24"><path d="M2.500 15.800L13 7.800M6.500 16.200L15.300 8.200" fill="none" stroke="#a32bc8" stroke-width="1.3" /><path d="M17 12.700V21M11.800 21H22.400" fill="none" stroke="#a32bc8" stroke-width="1.3" /></svg>
<svg class="i" style="left:771.5px;top:145.5px" width="24" height="24" viewBox="0 0 24 24"><path d="M2.400 2.900V20.200M21.700 2.900V20.200" fill="none" stroke="#10107a" stroke-width="2.2" /><path d="M12 1.500V22.500" fill="none" stroke="#111" stroke-width="1.2" stroke-dasharray="4.500 1.500"/><path d="M8 5V8.500H16V5" fill="none" stroke="#aaa" stroke-width="1" /><path d="M10.500 3.400L6 1V5.800ZM13.500 3.400L18 1V5.800Z" fill="#a020c0"/><path d="M2.400 20.200H21.700" fill="none" stroke="#999" stroke-width="0.8" /></svg>
<div class="b tg" style="left:802.5px;top:141.3px;width:33px;height:31.4px;"></div>
<svg class="i" style="left:807px;top:145.5px" width="24" height="24" viewBox="0 0 24 24"><path d="M0.5 7.9L6.09 12.2L0.5 16.5Z" fill="#22aa3c"/><path d="M9 10.500L20 2M13.400 10.900L22.700 2.900" fill="none" stroke="#7d1a66" stroke-width="1.4" /><path d="M16.500 13.500V22.600M11 22.600H21.800" fill="none" stroke="#7d1a66" stroke-width="1.4" /></svg>
<div class="b tg" style="left:836.5px;top:141.3px;width:33px;height:31.4px;"></div>
<svg class="i" style="left:841px;top:145.5px" width="24" height="24" viewBox="0 0 24 24"><path d="M1 1.3L6.46 5.5L1 9.7Z" fill="#22aa3c"/><path d="M11.500 1.200H19M11.500 0V2.500M19 0V2.500M11.500 22.500H19M11.500 21V24M19 21V24M21.500 5.500V18.500M20 5.500H23.500M20 18.500H23.500" fill="none" stroke="#8a2a9a" stroke-width="1.1" /><path d="M4 11.500H10L14 6H18.500V18.500H4Z" fill="none" stroke="#10106a" stroke-width="1.5" /><path d="M7.4 15.7L14 7" fill="none" stroke="#333" stroke-width="3" stroke-linecap="round"/><path d="M7.4 15.7L14 7" fill="none" stroke="#fafafa" stroke-width="1.5" stroke-linecap="round"/><path d="M3 21.5L7.4 15.7" fill="none" stroke="#8a1a1a" stroke-width="4.6" stroke-linecap="round"/><path d="M3 21.5L7.4 15.7" fill="none" stroke="#e25552" stroke-width="2.8" stroke-linecap="round"/></svg>
<svg class="i" style="left:874.5px;top:145.5px" width="24" height="24" viewBox="0 0 24 24"><path d="M10.500 .7V20.700M2 20.700H21.500" fill="none" stroke="#7a2a6a" stroke-width="1.2" /><path d="M10.500 14.500H16.500V20.700" fill="none" stroke="#e05a8a" stroke-width="1.2" /><path d="M7.6 12.2L14.5 3.5" fill="none" stroke="#333" stroke-width="3" stroke-linecap="round"/><path d="M7.6 12.2L14.5 3.5" fill="none" stroke="#fafafa" stroke-width="1.5" stroke-linecap="round"/><path d="M3 18L7.6 12.2" fill="none" stroke="#8a1a1a" stroke-width="4.6" stroke-linecap="round"/><path d="M3 18L7.6 12.2" fill="none" stroke="#e25552" stroke-width="2.8" stroke-linecap="round"/></svg>
<svg class="i" style="left:908.5px;top:145.5px" width="24" height="24" viewBox="0 0 24 24"><path d="M13 1H18M13 0V2.500M18 0V2.500M21 4V16.500M19.500 4H23M19.500 16.500H23" fill="none" stroke="#b06ad0" stroke-width="1" /><path d="M5 10.500H11L14 6.500H17.500V18H5M5 19.500H19.500M19.500 2V20" fill="none" stroke="#a060c8" stroke-width="1.2" /><path d="M7.1 14.7L14 6" fill="none" stroke="#333" stroke-width="3" stroke-linecap="round"/><path d="M7.1 14.7L14 6" fill="none" stroke="#fafafa" stroke-width="1.5" stroke-linecap="round"/><path d="M2.5 20.5L7.1 14.7" fill="none" stroke="#8a1a1a" stroke-width="4.6" stroke-linecap="round"/><path d="M2.5 20.5L7.1 14.7" fill="none" stroke="#e25552" stroke-width="2.8" stroke-linecap="round"/></svg>
<svg class="i" style="left:942px;top:145.5px" width="24" height="24" viewBox="0 0 24 24"><path d="M1.500 7L9 1M5.500 8L12 2.500" fill="none" stroke="#a32bc8" stroke-width="1.1" /><path d="M15.500 4V12.500M10 12.500H21" fill="none" stroke="#a32bc8" stroke-width="1.2" /><rect x="1.800" y="14.800" width="20.700" height="7.200" fill="#fff" stroke="#10106a" stroke-width="1.300"/><path d="M1.800 22.300H22.800V15" stroke="#10106a" stroke-width=".9" fill="none"/><path d="M4 17.300H20.500M4 19.800H20.500" stroke="#222" stroke-width="1.100" stroke-dasharray="2.400 .8"/></svg>
<svg class="i" style="left:975px;top:145.5px" width="24" height="24" viewBox="0 0 24 24"><path d="M1.200 2.500V22.500" fill="none" stroke="#1a1a8a" stroke-width="1.3" /><path d="M5.500 3.500V21.500M3 2.800H8M3 22H8" fill="none" stroke="#d81828" stroke-width="1.1" /><path d="M5.500 3L3.700 6.500H7.300ZM5.500 22L3.700 18.500H7.300Z" fill="#d81828"/><path d="M10 6L14 10L10 12Z M10.500 13.500L14.500 18.500L10 17Z" fill="#f4a050" stroke="#e07a20" stroke-width=".6"/><path d="M17.400 2.500V22.500" fill="none" stroke="#888" stroke-width="1.1" /><path d="M21.400 3.500V21.500M19 2.800H24M19 22H24" fill="none" stroke="#888" stroke-width="1" /><path d="M21.400 3L19.900 6.200H22.900ZM21.400 22L19.900 18.800H22.900Z" fill="#888"/></svg>
<svg class="i" style="left:1009.5px;top:145.5px" width="24" height="24" viewBox="0 0 24 24"><path d="M1.800 8.500V21H10.200V8.500H8V12.500H4V8.500Z" fill="none" stroke="#111" stroke-width="1.2" /><path d="M13.800 21V8.500H16V3H20.500V8.500H22.700V21Z" fill="none" stroke="#111" stroke-width="1.2" /><path d="M4 12.500H8M16 3H20.500" fill="none" stroke="#e04a5a" stroke-width="1.1" /><path d="M5.500 6.500C6 2.800 10 2.500 12 3.800" fill="none" stroke="#f0a848" stroke-width="1.600"/><path d="M11 1L14.800 4.200L10.500 6Z" fill="#f0a848"/></svg>
<svg class="i" style="left:1044px;top:145.5px" width="24" height="24" viewBox="0 0 24 24"><path d="M2 20.800H22.800M12.700 6V20.800" fill="none" stroke="#111" stroke-width="1.2" /><path d="M12.700 15H18.500V20.800" fill="none" stroke="#a040c0" stroke-width="1.1" /><path d="M6.500 17.500L14 8" fill="none" stroke="#444" stroke-width="0.9" stroke-dasharray="1.500 1"/><path d="M14.500 1.500H19.500L17 5H19.800L12.500 12L14.200 7H12Z" fill="#dfe62a" stroke="#3a4a10" stroke-width=".7"/></svg>
<div class="b tg" style="left:1074px;top:141.3px;width:33.5px;height:31.4px;"></div>
<svg class="i" style="left:1079px;top:145.5px" width="24" height="24" viewBox="0 0 24 24"><path d="M8.500 .5L9.800 4.800L13 2L12.300 6L16.500 5.500L13.500 8.500L17 11L12.800 11.200L13.300 15L10 12.300L8 15.800L7.200 12L3.200 13.300L5.600 10L1.500 7.500L6 7Z" fill="#f8f25a" stroke="#f4f0b0" stroke-width=".8"/><path d="M5 22.500L13.500 10.500" fill="none" stroke="#5a5a3a" stroke-width="1.1" /><path d="M12 7.500L17.500 6.500L15.500 9.500L17.500 10L11.800 14.800L13.300 11Z" fill="#c8d020" stroke="#3a3a10" stroke-width=".6"/><path d="M19.500 8V14.500M15.500 14.500H23.500" fill="none" stroke="#a32bc8" stroke-width="1.1" /><path d="M12.500 22.500L20 15.500M16.500 22.500L23.500 16" fill="none" stroke="#a32bc8" stroke-width="1.1" /></svg>
<svg class="i" style="left:1112px;top:145.5px" width="24" height="24" viewBox="0 0 24 24"><path d="M12.500 1.200H17.500M12.500 0V2.500M17.500 0V2.500M20 4.500V15M18.500 4.500H21.500" fill="none" stroke="#d050e0" stroke-width="1" /><path d="M4 10.500H11.500V5H17.500V20H4Z" fill="none" stroke="#3a3aa8" stroke-width="1.2" /><rect x="12.300" y="6" width="4.500" height="13" fill="#f0dcf8"/><circle cx="15.500" cy="18" r="4.800" fill="none" stroke="#2a2ac0" stroke-width="1.400"/><path d="M19 15L22.500 18.500L18.500 19.500Z" fill="#2a2ac0"/><path d="M6.3 15.1L12 7" fill="none" stroke="#333" stroke-width="3" stroke-linecap="round"/><path d="M6.3 15.1L12 7" fill="none" stroke="#fafafa" stroke-width="1.5" stroke-linecap="round"/><path d="M2.5 20.5L6.3 15.1" fill="none" stroke="#8a1a1a" stroke-width="4.6" stroke-linecap="round"/><path d="M2.5 20.5L6.3 15.1" fill="none" stroke="#e25552" stroke-width="2.8" stroke-linecap="round"/></svg>
<svg class="i" style="left:1145.8px;top:160.4px" width="8.4" height="4.700" viewBox="0 0 9 5"><path d="M0 0H9L4.500 5Z" fill="#111"/></svg>
<div class="b cb" style="left:7.3px;top:181.8px;width:169.7px;height:22px;"></div>
<div class="b cbb" style="left:150px;top:182.8px;width:26px;height:20px;"></div>
<svg class="i" style="left:157px;top:189.8px" width="12" height="7" viewBox="0 0 12 7"><path d="M0 0H12L6 7Z" fill="#0a1422"/></svg>
<div class="t" style="left:9.3px;top:183.1px;font-size:17.8px;letter-spacing:-.12px;line-height:19px;color:#111">无选择过滤器</div>
<div class="b cb" style="left:188.5px;top:181.8px;width:179.5px;height:22px;"></div>
<div class="b cbb" style="left:341px;top:182.8px;width:26px;height:20px;"></div>
<svg class="i" style="left:348px;top:189.8px" width="12" height="7" viewBox="0 0 12 7"><path d="M0 0H12L6 7Z" fill="#0a1422"/></svg>
<div class="t" style="left:190.5px;top:183.1px;font-size:17.8px;letter-spacing:-.12px;line-height:19px;color:#111">整个装配</div>
<svg class="i" style="left:379px;top:181px" width="24" height="24" viewBox="0 0 24 24"><path d="M2 8L8.500 6V20L2 18Z" fill="#a4a4a4" stroke="#969696" stroke-width=".6"/><path d="M8.500 13L14 15V22.500L8.500 20Z" fill="#a9a9a9" stroke="#969696" stroke-width=".6"/><path d="M2 13L8.500 13M5 7V19" stroke="#bbb" stroke-width=".7"/><path d="M8 .5V13M3 6.500H14" fill="none" stroke="#8f8f8f" stroke-width="1.1" /><circle cx="8" cy="6.500" r="2.800" fill="none" stroke="#8f8f8f" stroke-width="1"/><circle cx="16.500" cy="6.500" r="3.800" fill="none" stroke="#9a9a8c" stroke-width="2.400"/><ellipse cx="19.500" cy="13.500" rx="3.500" ry="5" fill="none" stroke="#9a9a8c" stroke-width="2.400" transform="rotate(-20 19.500 13.500)"/></svg>
<div class="b " style="left:411px;top:179px;width:1px;height:28px;background:#cecece"></div>
<div class="b " style="left:412px;top:179px;width:1px;height:28px;background:#f6f6f6"></div>
<svg class="i" style="left:419px;top:181px" width="24" height="24" viewBox="0 0 24 24"><path d="M1.500 7L7.500 2V5C12 5 14 3.500 13 .8C17.500 4 15 10 7.500 9.500V12.500Z" fill="#8fa0a4"/><path d="M9.500 14.500H22.500L17.500 19V23.500H14.500V19Z" fill="#a3a392"/><ellipse cx="16" cy="14.500" rx="6.500" ry="1.500" fill="#b3b3a0"/></svg>
<div class="b " style="left:452px;top:182px;width:22px;height:22px;border:1px solid #d0342c;box-sizing:border-box"></div>
<svg class="i" style="left:451px;top:181px" width="24" height="24" viewBox="0 0 24 24"><path d="M7.300 2.500V12M2.500 7.200H12" fill="none" stroke="#111" stroke-width="1.3" /><circle cx="7.300" cy="7.200" r="2.500" fill="none" stroke="#a01020" stroke-width="1.100"/><path d="M10 11H21L16.800 15.500V20.700H14.200V15.500Z" fill="#f2c81a" stroke="#d8a010" stroke-width=".6"/><ellipse cx="15.500" cy="11" rx="5.500" ry="1.500" fill="#fae278" stroke="#d8a010" stroke-width=".6"/></svg>
<svg class="i" style="left:482.8px;top:189.9px" width="8.4" height="4.700" viewBox="0 0 9 5"><path d="M0 0H9L4.500 5Z" fill="#111"/></svg>
<svg class="i" style="left:498px;top:181px" width="24" height="24" viewBox="0 0 24 24"><path d="M1.500 6.500L5.500 2L6 5C10 1 14.500 4 12.500 8.500" fill="none" stroke="#909090" stroke-width="1.600"/><path d="M1 3L2.500 8.500L7 6Z" fill="#909090"/><circle cx="15.500" cy="15.500" r="4.300" fill="none" stroke="#8e8e8e" stroke-width="1.300"/><path d="M15.500 8V23M8 15.500H23" fill="none" stroke="#8e8e8e" stroke-width="1.2" /></svg>
<div class="b " style="left:531px;top:179px;width:1px;height:28px;background:#cecece"></div>
<div class="b " style="left:532px;top:179px;width:1px;height:28px;background:#f6f6f6"></div>
<svg class="i" style="left:538px;top:181px" width="24" height="24" viewBox="0 0 24 24"><rect x="3.200" y="3.600" width="18" height="15.600" fill="none" stroke="#111" stroke-width="1.300" stroke-dasharray="2.400 1.700"/><circle cx="3" cy="3.3" r="1.9" fill="#a01030"/><circle cx="21.2" cy="19.3" r="2.2" fill="#b0102c"/></svg>
<svg class="i" style="left:573.8px;top:190.2px" width="7" height="4" viewBox="0 0 7 4"><path d="M0 0H6.400L3.200 3.600Z" fill="#111"/></svg>
<div class="b " style="left:588px;top:179px;width:1px;height:28px;background:#cecece"></div>
<div class="b " style="left:589px;top:179px;width:1px;height:28px;background:#f6f6f6"></div>
<svg class="i" style="left:595px;top:181px" width="24" height="24" viewBox="0 0 24 24"><path d="M2 14.500C3 8 5 4.500 8 3.500L13.500 2.500L20 5L21.500 8V16L14 19.500L12 17.500L10 20.500Z" fill="#f4f6f8" stroke="#2a3a6a" stroke-width="1" stroke-linejoin="round"/><path d="M8 3.500L16 7.500C13 9.500 11.500 14 10 20.500M16 7.500L21.500 8M14 19.500V11.500L16 7.500M12 17.500C12.500 14 13 12.500 14 11.500" fill="none" stroke="#2a3a6a" stroke-width=".9"/><path d="M2 14.500L10 20.500C11 14 13 9.500 16 7.500L8 3.500C5 4.500 3 8 2 14.500Z" fill="#dfe8f2"/><path d="M7 6.500L13.500 9.800" fill="none" stroke="#d8202c" stroke-width="1.8" /></svg>
<svg class="i" style="left:629px;top:181px" width="24" height="24" viewBox="0 0 24 24"><defs><linearGradient id="s7g" x1="0" y1="0" x2="1" y2="1"><stop offset="0" stop-color="#bcd8fc"/><stop offset="1" stop-color="#3a7ae8"/></linearGradient></defs><path d="M2 6L10.500 1.500L22.500 6.500V17.500L14 22.500L2 16.500Z" fill="url(#s7g)" stroke="#3a6ad8" stroke-width=".8"/><path d="M2 6L14 11V22.500M14 11L22.500 6.500" fill="none" stroke="#2a5acc" stroke-width=".9"/><path d="M14 11L22.500 6.500V17.500L14 22.500Z" fill="#2a62e0" opacity=".75"/><path d="M10.500 1.500V12.500L14 14.500H22" fill="none" stroke="#e0486a" stroke-width="1.200"/></svg>
<div class="b " style="left:661px;top:179px;width:1px;height:28px;background:#cecece"></div>
<div class="b " style="left:662px;top:179px;width:1px;height:28px;background:#f6f6f6"></div>
<div class="b tg" style="left:665px;top:177.5px;width:33px;height:31.2px;"></div>
<svg class="i" style="left:669.5px;top:181px" width="24" height="24" viewBox="0 0 24 24"><path d="M1.5 1.7L7.09 6L1.5 10.3Z" fill="#22aa3c"/><path d="M2 13.5L7.2 17.5L2 21.5Z" fill="#c8241c"/><circle cx="16.500" cy="12.500" r="7.800" fill="none" stroke="#b0b0b0" stroke-width=".9"/><g transform="rotate(0 16.500 12.500)"><path d="M15.300 3.500H17.700V6.500H19.500L16.500 9.800L13.500 6.500H15.300Z" fill="#fff" stroke="#111" stroke-width="1"/></g><g transform="rotate(90 16.500 12.500)"><path d="M15.300 3.500H17.700V6.500H19.500L16.500 9.800L13.500 6.500H15.300Z" fill="#fff" stroke="#111" stroke-width="1"/></g><g transform="rotate(180 16.500 12.500)"><path d="M15.300 3.500H17.700V6.500H19.500L16.500 9.800L13.500 6.500H15.300Z" fill="#fff" stroke="#111" stroke-width="1"/></g><g transform="rotate(270 16.500 12.500)"><path d="M15.300 3.500H17.700V6.500H19.500L16.500 9.800L13.500 6.500H15.300Z" fill="#fff" stroke="#111" stroke-width="1"/></g><circle cx="16.500" cy="12.500" r="2.200" fill="#f4e020" stroke="#a89010" stroke-width=".6"/></svg>
<div class="b tg" style="left:699.5px;top:177.5px;width:33px;height:31.2px;"></div>
<svg class="i" style="left:704px;top:181px" width="24" height="24" viewBox="0 0 24 24"><path d="M2 23L20 5" fill="none" stroke="#111" stroke-width="1.3" /><circle cx="20" cy="5" r="2.4" fill="#c0201c"/></svg>
<div class="b tg" style="left:734px;top:177.5px;width:33px;height:31.2px;"></div>
<svg class="i" style="left:738.5px;top:181px" width="24" height="24" viewBox="0 0 24 24"><path d="M2.600 21.600L20.300 4.300" fill="none" stroke="#111" stroke-width="1.3" /><circle cx="11.4" cy="13.2" r="2.4" fill="#c0201c"/></svg>
<div class="b tg" style="left:801px;top:177.5px;width:33px;height:31.2px;"></div>
<svg class="i" style="left:805.5px;top:181px" width="24" height="24" viewBox="0 0 24 24"><path d="M8 3.900L2.800 13.200M8 3.900L15.900 20.900L21.900 11.200" fill="none" stroke="#7a2ab8" stroke-width="1" /><path d="M2.800 13.200C5 11 9 10.500 11 12.500S16 16 21.900 11.200" fill="none" stroke="#111" stroke-width="1.4" /><circle cx="8" cy="3.9" r="2.2" fill="#c0201c"/><circle cx="2.8" cy="13.2" r="2.2" fill="#c0201c"/><circle cx="21.9" cy="11.2" r="2.2" fill="#c0201c"/><circle cx="15.9" cy="20.9" r="2.2" fill="#c0201c"/></svg>
<div class="b tg" style="left:835.5px;top:177.5px;width:33px;height:31.2px;"></div>
<svg class="i" style="left:840px;top:181px" width="24" height="24" viewBox="0 0 24 24"><path d="M2 18.200C3 12 6 9 8.500 10.800S14 17.500 17.500 15.500S21 11 22 8.500" fill="none" stroke="#111" stroke-width="1.9" /><circle cx="2" cy="18.2" r="2.1" fill="#c0201c"/><circle cx="7.4" cy="10.5" r="2.1" fill="#c0201c"/><circle cx="17" cy="15.9" r="2.1" fill="#c0201c"/><circle cx="22" cy="8.5" r="2.1" fill="#c0201c"/></svg>
<div class="b tg" style="left:903px;top:177.5px;width:33.5px;height:31.2px;"></div>
<svg class="i" style="left:907.75px;top:181px" width="24" height="24" viewBox="0 0 24 24"><circle cx="12.500" cy="12.500" r="10.200" fill="none" stroke="#111" stroke-width="1.400"/><path d="M12.500 8.500L13.700 11.300L16.500 12.500L13.700 13.700L12.500 16.500L11.300 13.700L8.500 12.500L11.300 11.300Z" fill="#c81818"/></svg>
<div class="b tg" style="left:971px;top:177.5px;width:33px;height:31.2px;"></div>
<svg class="i" style="left:975.5px;top:181px" width="24" height="24" viewBox="0 0 24 24"><path d="M3.600 12.500H22.500M12.900 3V22" fill="none" stroke="#111" stroke-width="1.3" /><circle cx="12.9" cy="12.5" r="2.3" fill="#c0201c"/></svg>
<div class="b tg" style="left:1005.5px;top:177.5px;width:33px;height:31.2px;"></div>
<svg class="i" style="left:1010px;top:181px" width="24" height="24" viewBox="0 0 24 24"><path d="M3.500 22L21 4.500" fill="none" stroke="#111" stroke-width="1.3" /><circle cx="7.5" cy="18" r="2.4" fill="#c0201c"/></svg>
<svg class="i" style="left:771px;top:181px" width="24" height="24" viewBox="0 0 24 24"><path d="M2 1.200C10 1 11.500 6 11.500 12S13 22.500 22 22.500" fill="none" stroke="#111" stroke-width="1.4" /><circle cx="11.3" cy="11.9" r="2.3" fill="#c0201c"/></svg>
<svg class="i" style="left:873px;top:181px" width="24" height="24" viewBox="0 0 24 24"><path d="M12.500 2.100V23" fill="none" stroke="#111" stroke-width="1.3" /><path d="M1.200 15.900C5 7 20 7 23.700 15.900" fill="none" stroke="#111" stroke-width="1.3" /><circle cx="12.5" cy="9.2" r="2.3" fill="#c0201c"/></svg>
<svg class="i" style="left:941px;top:181px" width="24" height="24" viewBox="0 0 24 24"><circle cx="11.500" cy="11.900" r="9.800" fill="none" stroke="#111" stroke-width="1.500"/><circle cx="11.5" cy="2.1" r="2.2" fill="#c0201c"/><circle cx="11.5" cy="21.7" r="2.2" fill="#c0201c"/><circle cx="1.7" cy="11.9" r="2.2" fill="#c0201c"/><circle cx="21.3" cy="11.9" r="2.2" fill="#c0201c"/></svg>
<svg class="i" style="left:1043px;top:181px" width="24" height="24" viewBox="0 0 24 24"><defs><linearGradient id="p12g" x1="0" y1="0" x2="1" y2="1"><stop offset="0" stop-color="#f2f7ff"/><stop offset="1" stop-color="#9cc0f0"/></linearGradient></defs><path d="M15 17L23 13L21 19.500L15.500 22.500Z" fill="#b8b8b8"/><path d="M8 1.500C3 3 .5 9 2.500 15.500L15.500 22.500C13.500 17 15 11 23 7Z" fill="url(#p12g)" stroke="#6a9ad8" stroke-width="1"/><circle cx="14" cy="8.5" r="2.3" fill="#c0201c"/></svg>
<div class="b " style="left:1075px;top:179px;width:1px;height:28px;background:#cecece"></div>
<div class="b " style="left:1076px;top:179px;width:1px;height:28px;background:#f6f6f6"></div>
<svg class="i" style="left:1082.5px;top:181px" width="24" height="24" viewBox="0 0 24 24"><path d="M2.5 1.5V16" stroke="#111" stroke-width="1.100"/><path d="M6.6 3.6V18.1" stroke="#111" stroke-width="1.100"/><path d="M10.7 5.7V20.2" stroke="#111" stroke-width="1.100"/><path d="M14.8 7.8V22.3" stroke="#111" stroke-width="1.100"/><path d="M18.9 9.9V24.4" stroke="#111" stroke-width="1.100"/><path d="M2.500 1.5L18.900 9.9" stroke="#111" stroke-width="1.100"/><path d="M2.500 5.1L18.900 13.5" stroke="#111" stroke-width="1.100"/><path d="M2.500 8.7L18.900 17.1" stroke="#111" stroke-width="1.100"/><path d="M2.500 12.3L18.900 20.7" stroke="#111" stroke-width="1.100"/><path d="M2.500 15.9L18.900 24.3" stroke="#111" stroke-width="1.100"/><circle cx="14.5" cy="11" r="2.4" fill="#c0201c"/></svg>
<svg class="i" style="left:1903.8px;top:195.4px" width="8.4" height="4.700" viewBox="0 0 9 5"><path d="M0 0H9L4.500 5Z" fill="#111"/></svg>
<div class="b " style="left:0px;top:211px;width:154px;height:23px;background:#5b5c5b"></div>
<svg class="i" style="left:6px;top:214px" width="16" height="16" viewBox="0 0 16 16"><path d="M2 9.500L8 7L14 9.500L8 12.500Z" fill="#c8ccff" stroke="#3a3ab0" stroke-width=".8"/><path d="M2 9.500V12L8 15L14 12V9.500L8 12.500Z" fill="#5a5ad0"/><path d="M2 4L8 1.500L14 4L8 7Z" fill="#e0e4ff" stroke="#3a3ab0" stroke-width=".8"/><path d="M2 4V6.500L8 9.500L14 6.500V4L8 7Z" fill="#4a4ac8"/></svg>
<div class="t" style="left:27px;top:212px;font-size:17.8px;letter-spacing:-.12px;line-height:19px;color:#e4e4e4">仪器盒<span class="a">.prt</span></div>
<svg class="i" style="left:122px;top:217px" width="10" height="11" viewBox="0 0 10 11"><path d="M5 1.5H1.5V9.5H8.5V6" fill="none" stroke="#eee" stroke-width="1.6"/><path d="M4.5 6L9 1.5M6 1H9.5V4.5" fill="none" stroke="#eee" stroke-width="1.6"/></svg>
<svg class="i" style="left:138px;top:217px" width="10" height="10" viewBox="0 0 10 10"><path d="M1 1L9 9M9 1L1 9" stroke="#bdbdbd" stroke-width="1.8"/></svg>
<div class="b" style="left:0;top:236px;width:1490px;height:783px;background:linear-gradient(#c2c2c2 0%,#c9c9c9 20%,#d0d2d2 40%,#d6dadb 55%,#dfe3e4 72%,#e4e8e9 88%,#e6eaeb 100%);overflow:hidden">
<svg class="i" style="left:0;top:0" width="1490" height="783" viewBox="0 236 1490 783">

<polygon points="622.2,632.5 901.4,436.7 908.3,808.3 785.5,894.4 780.5,666.7" fill="#76a461"/>
<polygon points="901.4,436.7 1060.5,470.8 1067.5,843 908.3,808.3" fill="#5a7c48"/>
<polygon points="622.2,632.5 780.5,666.7 787,1022 700,1022 629,1004.7" fill="#5a7c48"/>
<path d="M622.2 632.5L901.4 436.7L904 438.400L624.500 634.500Z" fill="#94b684"/>
<g fill="none" stroke="#22361e" stroke-width="1.500" stroke-linejoin="round">
<path d="M622.2 632.5L901.4 436.7L1060.5 470.8L1067.5 843L908.3 808.300L785.5 894.400"/>
<path d="M901.4 436.7L908.3 808.300"/>
<path d="M622.2 632.5L780.5 666.7L787 1022M622.2 632.5L629 1004.7L705 1022"/>
</g>
<g fill="none" stroke="#2c4526" stroke-width=".8">
<path d="M624.800 634.300L903.800 438.600L910.500 807"/>
<path d="M1059 471.800L1066 842"/>
</g>
<circle cx="945" cy="511" r="11.300" fill="none" stroke="#2f8a90" stroke-width="4.600"/>
<circle cx="945" cy="511" r="11.300" fill="none" stroke="#5cc0c6" stroke-width="2.800"/>
<path d="M934.300 514.500A11.300 11.300 0 0 0 952 519.800" fill="none" stroke="#6cf2ea" stroke-width="3.400" stroke-linecap="round"/>
<path d="M936 504.200A11.300 11.300 0 0 1 954.500 505" fill="none" stroke="#c0e4e8" stroke-width="2.600" stroke-linecap="round"/>
<path d="M761 534.500L779.500 538" stroke="#e0502a" stroke-width="1.100" stroke-dasharray="4 1.500"/>
<path d="M768.500 719.300L781.700 707.300" stroke="#c4eeb4" stroke-width="1.600" stroke-linecap="round"/><path d="M780 708.700L783 705.400L792.300 701.500L785 709.500Z" fill="#3aa83a"/>
<path d="M769.500 720.500L783 723.500" stroke="#9ab8e8" stroke-width="1.600"/><path d="M782 721.300L800 724.800L813.800 730.900L797 730L782 725Z" fill="#1248d8"/>
<path d="M766 724L768.200 759L764 759Z" fill="#d88a78"/><path d="M764 759.500H768.200L766.500 771.500Z" fill="#dc9484"/><path d="M764 758.600H768.300" stroke="#f0c0b4" stroke-width=".9"/>
<text x="799.500" y="745.600" font-family="Liberation Sans,sans-serif" font-size="12.500" fill="#2a5cd8">ZC</text>
<text x="747.500" y="783.500" font-family="Liberation Sans,sans-serif" font-size="12.500" fill="#d04a3a">XC</text>
<text x="780.500" y="697" font-family="Liberation Sans,sans-serif" font-size="11.500" fill="#4a9a4a" opacity=".8">YC</text>

</svg>
</div>
<div class="b " style="left:0px;top:236px;width:1px;height:783px;background:#a9a9a9"></div>
<div class="b " style="left:1px;top:236px;width:2px;height:783px;background:rgba(255,255,255,.12)"></div>
<div class="b " style="left:0px;top:1019px;width:1920px;height:1px;background:#9c9c9c"></div>
<div class="b" style="left:1490px;top:211px;width:399px;height:808px;background:#ebebeb;box-shadow:inset 1px 2px 0 #fff"></div><div class="b" style="left:1490px;top:211px;width:399px;height:1px;background:#7f7f7f"></div>
<div class="b" style="left:1889px;top:211px;width:31px;height:808px;background:linear-gradient(90deg,#a6a6a6,#b0b0b0 20%,#b5b5b5)"></div><div class="b" style="left:1888px;top:212px;width:1px;height:806px;background:#fbfbfb"></div>
<div class="b" style="left:1504px;top:226.800px;width:19.500px;height:17.700px;box-sizing:border-box;border:2px solid #080808;border-top-width:4px"></div>
<div class="t" style="left:1536px;top:225px;font-size:18.600px;line-height:22px;font-weight:bold;color:#111;letter-spacing:0">部件导航器</div>
<div class="b" style="left:1500px;top:254px;width:382px;height:747px;background:#fff;box-sizing:border-box;border:1.500px solid #8f8f8f;overflow:hidden">
<div class="b" style="left:0;top:0;width:380px;height:27px;background:linear-gradient(#f4f4f4,#ececec 45%,#dcdcdc 55%,#d6d6d6);border-bottom:1px solid #b9b9b9"></div>
<div class="b" style="left:0;top:27.500px;width:380px;height:692px;background:repeating-linear-gradient(#fff 0,#fff 27px,#ededed 27px,#ededed 28px,#f5f5f5 28px,#f5f5f5 55px,#ededed 55px,#ededed 56px)"></div>
<div class="b" style="left:199.500px;top:0;width:1px;height:720px;background:#ececec"></div><div class="b" style="left:299.500px;top:0;width:1px;height:720px;background:#ececec"></div>
<div class="b" style="left:199px;top:1px;width:1px;height:25px;background:#b3b3b3;box-shadow:1px 0 0 #fafafa"></div><div class="b" style="left:299px;top:1px;width:1px;height:25px;background:#b3b3b3;box-shadow:1px 0 0 #fafafa"></div>
<div class="b" style="left:0;top:719.500px;width:380px;height:25px;background:#f0f0f0"></div>
<div class="b" style="left:27.500px;top:720.500px;width:305px;height:23px;box-sizing:border-box;border:1px solid #9a9a9a;border-radius:2px;background:linear-gradient(#e6e6e6,#dcdcdc 48%,#cfcfcf 52%,#d4d4d4)"></div>
<div class="b" style="left:172px;top:726.500px;width:2px;height:11px;background:#555;box-shadow:4.500px 0 0 #555,9px 0 0 #555"></div>
<svg class="i" style="left:9px;top:726px" width="7" height="11" viewBox="0 0 7 11"><path d="M6.500 0V11L0 5.500Z" fill="#444"/></svg>
<svg class="i" style="left:362px;top:726px" width="7" height="11" viewBox="0 0 7 11"><path d="M0 0V11L6.500 5.500Z" fill="#444"/></svg>
</div>
<div class="t" style="left:1509px;top:258.500px;font-size:17.800px;letter-spacing:-.12px;line-height:20px;color:#2a2a2a">名称</div>
<svg class="i" style="left:1563.5px;top:264.5px" width="11" height="7" viewBox="0 0 11 7"><path d="M0 6.500H11L5.500 0Z" fill="#222"/></svg>
<div class="t" style="left:1708.500px;top:258.500px;font-size:17.800px;letter-spacing:-.12px;line-height:20px;color:#2a2a2a">最新</div>
<div class="t" style="left:1808.500px;top:258.500px;font-size:17.800px;letter-spacing:-.12px;line-height:20px;color:#2a2a2a">附注</div>
<div class="b" style="left:1511px;top:303px;width:0;height:128px;border-left:1px dotted #9a9a9a"></div>
<div class="b" style="left:1530px;top:451px;width:0;height:42px;border-left:1px dotted #9a9a9a"></div>
<div class="b" style="left:1530px;top:464.500px;width:10px;height:0;border-top:1px dotted #9a9a9a"></div><div class="b" style="left:1530px;top:492.500px;width:10px;height:0;border-top:1px dotted #9a9a9a"></div>
<svg class="i" style="left:1506px;top:292px" width="9" height="9" viewBox="0 0 9 9"><rect x=".5" y=".5" width="8" height="8" rx="1.500" fill="#fafafa" stroke="#9a9a9a"/><path d="M2 4.500H7M4.500 2V7" stroke="#222" stroke-width="1.200"/></svg>
<svg class="i" style="left:1506px;top:320px" width="9" height="9" viewBox="0 0 9 9"><rect x=".5" y=".5" width="8" height="8" rx="1.500" fill="#fafafa" stroke="#9a9a9a"/><path d="M2 4.500H7M4.500 2V7" stroke="#222" stroke-width="1.200"/></svg>
<svg class="i" style="left:1506px;top:348px" width="9" height="9" viewBox="0 0 9 9"><rect x=".5" y=".5" width="8" height="8" rx="1.500" fill="#fafafa" stroke="#9a9a9a"/><path d="M2 4.500H7M4.500 2V7" stroke="#222" stroke-width="1.200"/></svg>
<svg class="i" style="left:1506px;top:376px" width="9" height="9" viewBox="0 0 9 9"><rect x=".5" y=".5" width="8" height="8" rx="1.500" fill="#fafafa" stroke="#9a9a9a"/><path d="M2 4.500H7M4.500 2V7" stroke="#222" stroke-width="1.200"/></svg>
<svg class="i" style="left:1506px;top:404px" width="9" height="9" viewBox="0 0 9 9"><rect x=".5" y=".5" width="8" height="8" rx="1.500" fill="#fafafa" stroke="#9a9a9a"/><path d="M2 4.500H7M4.500 2V7" stroke="#222" stroke-width="1.200"/></svg>
<svg class="i" style="left:1506px;top:432px" width="9" height="9" viewBox="0 0 9 9"><rect x=".5" y=".5" width="8" height="8" rx="1.500" fill="#fafafa" stroke="#9a9a9a"/><path d="M2 4.500H7" stroke="#222" stroke-width="1.200"/></svg>
<svg class="i" style="left:1520.5px;top:288.5px" width="17" height="17" viewBox="0 0 17 17"><path d="M7.500 1L13.500 4.500V11.500L7.500 15L1.500 11.500V4.500Z" fill="#eafaf0" stroke="#1aa060" stroke-width="1.300"/><path d="M1.500 4.500L7.500 8L13.500 4.500M7.500 8V15M7.500 1V8M1.500 11.500L7.500 8L13.500 11.500" fill="none" stroke="#1aa060" stroke-width="1"/><path d="M8 16.500L16 12.500" stroke="#e04a1a" stroke-width="1.500"/><path d="M13 11.500L16.800 12L14.500 15Z" fill="#e04a1a"/></svg>
<div class="nv" style="left:1541px;top:286.500px">模型视图</div>
<svg class="i" style="left:1523px;top:319px" width="13" height="11" viewBox="0 0 13 11"><path d="M.5 6L3 3.800L4.900 6.300L10.300 .4L12.600 2L5.200 10.800Z" fill="#25bb3e" stroke="#168a2a" stroke-width=".6"/></svg>
<svg class="i" style="left:1537.5px;top:316.5px" width="15" height="16" viewBox="0 0 15 16"><path d="M1 6L11 1.500L13 11.500L1.500 14.500Z" fill="#fde8e4" stroke="#d8301c" stroke-width="1.200"/><circle cx="7" cy="7" r="2.800" fill="#c8c8ff" stroke="#2a2a9a" stroke-width="1.200"/><path d="M11 6.500L14.500 7.500V11L11.500 10.500Z" fill="#111"/></svg>
<div class="nv" style="left:1556.500px;top:314.500px">摄像机</div>
<svg class="i" style="left:1523px;top:347px" width="13" height="11" viewBox="0 0 13 11"><path d="M.5 6L3 3.800L4.900 6.300L10.300 .4L12.600 2L5.200 10.800Z" fill="#25bb3e" stroke="#168a2a" stroke-width=".6"/></svg>
<svg class="i" style="left:1537px;top:344px" width="17" height="17" viewBox="0 0 17 17"><rect x="3.500" y="1.500" width="12.500" height="11" fill="#dfe0f8" stroke="#5a5aa8" stroke-width="1"/><rect x="1" y="4" width="13.500" height="11.500" fill="#eeeefc" stroke="#5a5aa8" stroke-width="1.200"/><rect x="8" y="11" width="6" height="4" fill="#cfd0f4" stroke="#5a5aa8" stroke-width=".9"/></svg>
<div class="nv" style="left:1558px;top:342.500px">图纸</div>
<svg class="i" style="left:1520.5px;top:372px" width="17" height="16" viewBox="0 0 17 16"><path d="M9 1.200H15.500M9 3.800H15.500" stroke="#1a1a7a" stroke-width="1.300"/><path d="M1 4.500H6L7.500 6.500H13V14.500H1Z" fill="#e8b820" stroke="#9a7208" stroke-width=".8"/><path d="M1 14.500L3.500 8H16L13 14.500Z" fill="#fbe07a" stroke="#9a7208" stroke-width=".8"/></svg>
<div class="nv" style="left:1541px;top:370.500px">用户表达式</div>
<svg class="i" style="left:1520.5px;top:400px" width="17" height="16" viewBox="0 0 17 16"><path d="M1 4.500H6L7.500 6.500H13V14.500H1Z" fill="#e8b820" stroke="#9a7208" stroke-width=".8"/><path d="M1 14.500L3.500 8H16L13 14.500Z" fill="#fbe07a" stroke="#9a7208" stroke-width=".8"/></svg>
<div class="nv" style="left:1541px;top:398.500px">非时间戳记几何体</div>
<svg class="i" style="left:1520.5px;top:428px" width="17" height="16" viewBox="0 0 17 16"><path d="M1 4.500H6L7.500 6.500H13V14.500H1Z" fill="#e8b820" stroke="#9a7208" stroke-width=".8"/><path d="M1 14.500L3.500 8H16L13 14.500Z" fill="#fbe07a" stroke="#9a7208" stroke-width=".8"/></svg>
<div class="nv" style="left:1541px;top:426.500px">模型历史记录</div>
<svg class="i" style="left:1541.5px;top:458.5px" width="12.5" height="12.5" viewBox="0 0 12.5 12.5"><rect x=".8" y=".8" width="10.900" height="10.900" fill="#fff" stroke="#111" stroke-width="1.500"/><path d="M2.500 6.500L4 5L5.500 7L9.500 2.500L10.800 3.600L5.700 10Z" fill="#22b83c"/></svg>
<svg class="i" style="left:1557px;top:456.5px" width="16" height="17" viewBox="0 0 16 17"><path d="M6 1.500L12.500 2.500L10 5V11L12.500 13L8 15.500L1.500 13L5 10V4Z" fill="#c8d4f8" stroke="#9aa8e0" stroke-width=".8"/><path d="M1.500 13L8 15.500L12.500 13" fill="none" stroke="#d8d8e8" stroke-width="1.500"/></svg>
<div class="nv" style="left:1575.500px;top:454.500px;color:#333"><span class="a">SB </span>基本轮<span class="a">...</span></div>
<svg class="i" style="left:1541.5px;top:486.5px" width="12.5" height="12.5" viewBox="0 0 12.5 12.5"><rect x=".8" y=".8" width="10.900" height="10.900" fill="#fff" stroke="#111" stroke-width="1.500"/><path d="M2.500 6.500L4 5L5.500 7L9.500 2.500L10.800 3.600L5.700 10Z" fill="#22b83c"/></svg>
<svg class="i" style="left:1556px;top:484px" width="16.5" height="17" viewBox="0 0 16.5 17"><rect x="1" y="1" width="14.500" height="15" fill="#eaf4ff" stroke="#2a6ab8" stroke-width="1.500" stroke-dasharray="2.500 1.500"/><rect x="3.500" y="3.500" width="3.500" height="3.500" fill="none" stroke="#111" stroke-width="1.200"/><rect x="3.500" y="10" width="4" height="3.500" fill="none" stroke="#111" stroke-width="1.200"/><rect x="9.500" y="10" width="3.500" height="3.500" fill="none" stroke="#111" stroke-width="1.200"/><path d="M8 8.500L12.500 3.500" stroke="#e0a020" stroke-width="1.800"/><path d="M12 2.500L13.500 4" stroke="#d02020" stroke-width="1.500"/></svg>
<div class="nv" style="left:1576px;top:482.500px;color:#000;-webkit-text-stroke:.55px #000">草图<span class="a" style="letter-spacing:-.3px"> (1) ...</span></div>
<svg class="i" style="left:1708px;top:459.5px" width="13" height="11" viewBox="0 0 13 11"><path d="M.5 6L3 3.800L4.900 6.300L10.300 .4L12.600 2L5.200 10.800Z" fill="#25bb3e" stroke="#168a2a" stroke-width=".6"/></svg>
<svg class="i" style="left:1708px;top:487.5px" width="13" height="11" viewBox="0 0 13 11"><path d="M.5 6L3 3.800L4.900 6.300L10.300 .4L12.600 2L5.200 10.800Z" fill="#25bb3e" stroke="#168a2a" stroke-width=".6"/></svg>
<div class="b" style="left:1500px;top:1007px;width:150px;height:1px;background:#c9c9c9;box-shadow:0 1px 0 #fafafa"></div><div class="b" style="left:1731px;top:1007px;width:150px;height:1px;background:#c9c9c9;box-shadow:0 1px 0 #fafafa"></div>
<div class="b" style="left:1656px;top:1005px;width:70px;height:5px;box-sizing:border-box;background:#dadada;border:1px solid #bcbcbc"></div>
<div class="b" style="left:1490px;top:1017.500px;width:399px;height:1.500px;background:#a9a9a9"></div>
<svg class="i" style="left:1897px;top:217.7px" width="16" height="16" viewBox="0 0 16 16"><circle cx="8" cy="8" r="4.900" fill="none" stroke="#151515" stroke-width="1.800"/><g fill="#151515"><path d="M8 .6L9.500 2.900H6.500Z" transform="rotate(0 8 8)"/><path d="M8 .6L9.500 2.900H6.500Z" transform="rotate(45 8 8)"/><path d="M8 .6L9.500 2.900H6.500Z" transform="rotate(90 8 8)"/><path d="M8 .6L9.500 2.900H6.500Z" transform="rotate(135 8 8)"/><path d="M8 .6L9.500 2.900H6.500Z" transform="rotate(180 8 8)"/><path d="M8 .6L9.500 2.900H6.500Z" transform="rotate(225 8 8)"/><path d="M8 .6L9.500 2.900H6.500Z" transform="rotate(270 8 8)"/><path d="M8 .6L9.500 2.900H6.500Z" transform="rotate(315 8 8)"/></g><circle cx="8" cy="8" r=".8" fill="#333"/></svg>
<div class="b" style="left:1889px;top:257px;width:26px;height:38.5px;background:linear-gradient(90deg,#d5d5d5,#e4e4e4);border-radius:0 5px 5px 0;box-shadow:1px 1px 0 #8f8f8f,inset 0 1px 0 #f2f2f2"></div>
<svg class="i" style="left:1890px;top:264.25px" width="24" height="24" viewBox="0 0 24 24"><path d="M2.7 2.8l3.7 -1.85l3.7 1.85l-3.7 1.85z" fill="#fff59a" stroke="#c8a818" stroke-width=".5"/><path d="M2.7 2.8v3.885l3.7 1.85v-3.885z" fill="#f6dc2a" stroke="#c8a818" stroke-width=".5"/><path d="M6.4 4.65l3.7 -1.85v3.885l-3.7 1.85z" fill="#e2bc14" stroke="#c8a818" stroke-width=".5"/><path d="M2.7 7.3l3.7 -1.85l3.7 1.85l-3.7 1.85z" fill="#fff59a" stroke="#c8a818" stroke-width=".5"/><path d="M2.7 7.3v3.885l3.7 1.85v-3.885z" fill="#f6dc2a" stroke="#c8a818" stroke-width=".5"/><path d="M6.4 9.15l3.7 -1.85v3.885l-3.7 1.85z" fill="#e2bc14" stroke="#c8a818" stroke-width=".5"/><path d="M7.2 7.2l3.7 -1.85l3.7 1.85l-3.7 1.85z" fill="#fff59a" stroke="#c8a818" stroke-width=".5"/><path d="M7.2 7.2v3.885l3.7 1.85v-3.885z" fill="#f6dc2a" stroke="#c8a818" stroke-width=".5"/><path d="M10.9 9.05l3.7 -1.85v3.885l-3.7 1.85z" fill="#e2bc14" stroke="#c8a818" stroke-width=".5"/><path d="M13.3 17.6l3.7 -1.85l3.7 1.85l-3.7 1.85z" fill="#fff59a" stroke="#c8a818" stroke-width=".5"/><path d="M13.3 17.6v3.885l3.7 1.85v-3.885z" fill="#f6dc2a" stroke="#c8a818" stroke-width=".5"/><path d="M17 19.45l3.7 -1.85v3.885l-3.7 1.85z" fill="#e2bc14" stroke="#c8a818" stroke-width=".5"/><path d="M5.400 12.500V23M5.400 17.900H10.900" stroke="#14147a" stroke-width="1.400" fill="none"/><path d="M14 12H23" stroke="#111" stroke-width="1.300"/></svg>
<div class="b" style="left:1889px;top:299.5px;width:26px;height:38px;background:linear-gradient(90deg,#d5d5d5,#e4e4e4);border-radius:0 5px 5px 0;box-shadow:1px 1px 0 #8f8f8f,inset 0 1px 0 #f2f2f2"></div>
<svg class="i" style="left:1890px;top:306.5px" width="24" height="24" viewBox="0 0 24 24"><path d="M4.500 1.500L11.500 6L4.500 10.500ZM19.500 1.500L12.500 6L19.500 10.500Z" fill="#1a1ad0"/><path d="M12 1V22" stroke="#111" stroke-width="1.200" stroke-dasharray="2.500 1.500"/><rect x="2" y="14" width="7.500" height="7.500" fill="#f8ec3a" stroke="#111" stroke-width="1"/><path d="M14 21.500V13.500L22 21.500Z" fill="#d81818" stroke="#8a1010" stroke-width=".8"/></svg>
<div class="b" style="left:1888px;top:338.5px;width:29px;height:43px;background:#ebebeb;border-radius:0 5px 5px 0;box-shadow:1px 1px 0 #8a8a8a"></div>
<svg class="i" style="left:1890px;top:348px" width="24" height="24" viewBox="0 0 24 24"><path d="M2.500 4V9C2.500 11 10.500 11 10.500 9V4Z" fill="#e8a8d8" stroke="#8a2a7a" stroke-width="1"/><ellipse cx="6.500" cy="4" rx="4" ry="1.800" fill="#f4c8ec" stroke="#8a2a7a" stroke-width="1"/><path d="M6.500 12.500V22M6.500 18H12M15 9.500H22.500" stroke="#1a1a7a" stroke-width="1.300" fill="none"/><circle cx="17.500" cy="18" r="3.600" fill="#fff" stroke="#8a2a7a" stroke-width="1.200"/><circle cx="17.500" cy="18" r="1.300" fill="#c0208a"/></svg>
<div class="b" style="left:1889px;top:383px;width:26px;height:38px;background:linear-gradient(90deg,#d5d5d5,#e4e4e4);border-radius:0 5px 5px 0;box-shadow:1px 1px 0 #8f8f8f,inset 0 1px 0 #f2f2f2"></div>
<svg class="i" style="left:1890px;top:390px" width="24" height="24" viewBox="0 0 24 24"><path d="M1 8L4 4.500H8.500L5.500 8Z" fill="#fbd0a0"/><path d="M1 8H5.500V20.500H1Z" fill="#f08a1a"/><path d="M6.500 8L9.500 4.500H14L11 8Z" fill="#b8f0a8"/><path d="M6.500 8H11V20.500H6.500Z" fill="#28b838"/><path d="M12 8L15 4.500H21.500L18.500 8Z" fill="#b8d4fc"/><path d="M12 8H18.500V20.500H12Z" fill="#3a8ae8"/><path d="M18.500 8L21.500 4.500V16.500L18.500 20.500Z" fill="#1a5ac0"/></svg>
<div class="b" style="left:1889px;top:425px;width:26px;height:38.5px;background:linear-gradient(90deg,#d5d5d5,#e4e4e4);border-radius:0 5px 5px 0;box-shadow:1px 1px 0 #8f8f8f,inset 0 1px 0 #f2f2f2"></div>
<svg class="i" style="left:1890px;top:432.25px" width="24" height="24" viewBox="0 0 24 24"><path d="M1.500 13C6 7.500 16 7 22 12.500C17 17.500 7 18 1.500 13Z" fill="#f4f4ec" stroke="#333" stroke-width="1"/><circle cx="12" cy="12.500" r="4" fill="#6a8a2a"/><circle cx="12" cy="12.500" r="1.800" fill="#222"/><path d="M2.500 10.500L5 8M5.500 8.500L7.500 6M9 7.500L10 5M12.500 7L13 4.500M16 7.500L17.500 5.500M19 9L21 7.500" stroke="#222" stroke-width="1"/></svg>
<div class="b" style="left:1889px;top:479px;width:26px;height:39px;background:linear-gradient(90deg,#d5d5d5,#e4e4e4);border-radius:0 5px 5px 0;box-shadow:1px 1px 0 #8f8f8f,inset 0 1px 0 #f2f2f2"></div>
<svg class="i" style="left:1890px;top:486.5px" width="24" height="24" viewBox="0 0 24 24"><circle cx="8.500" cy="15.500" r="6.800" fill="#1a6ad8" stroke="#0a3a9a" stroke-width=".8"/><path d="M7 12.500H9.800V19H11V20H6.500V19H7.800V13.500H7Z" fill="#fff"/><circle cx="8.500" cy="10.800" r="1.300" fill="#fff"/><path d="M9 6C13.500 5.500 17.500 9.500 17.500 14M10 2.500C16.500 2 21.500 7 21.500 13.500" fill="none" stroke="#2a3ab8" stroke-width="2.200"/></svg>
<div class="b" style="left:1889px;top:532.5px;width:26px;height:39px;background:linear-gradient(90deg,#d5d5d5,#e4e4e4);border-radius:0 5px 5px 0;box-shadow:1px 1px 0 #8f8f8f,inset 0 1px 0 #f2f2f2"></div>
<svg class="i" style="left:1890px;top:540px" width="24" height="24" viewBox="0 0 24 24"><path d="M4 2H15L20.500 7.500V21.500H4Z" fill="#fff" stroke="#2a4ab8" stroke-width="1.300"/><path d="M15 2V7.500H20.500" fill="#dde6fb" stroke="#2a4ab8" stroke-width="1"/><circle cx="12" cy="14.500" r="5" fill="#3a9a4a"/><path d="M8.500 12C10 13 12 12 12.500 10M11 19C11.500 17 14 17 15.500 15.500" stroke="#9ad0f8" stroke-width="1.800" fill="none"/></svg>
<div class="b" style="left:1889px;top:574.5px;width:26px;height:39px;background:linear-gradient(90deg,#d5d5d5,#e4e4e4);border-radius:0 5px 5px 0;box-shadow:1px 1px 0 #8f8f8f,inset 0 1px 0 #f2f2f2"></div>
<svg class="i" style="left:1890px;top:582px" width="24" height="24" viewBox="0 0 24 24"><path d="M1 13L10 9.500L15 7L19 12.500L13 16H8L9.500 13.500Z" fill="#f8dcb4" stroke="#b88a4a" stroke-width=".8"/><path d="M14.500 6.500L19 4L22.500 10.500L19 13Z" fill="#3a3ac8" stroke="#1a1a8a" stroke-width=".7"/></svg>
<div class="b" style="left:1889px;top:629px;width:26px;height:39px;background:linear-gradient(90deg,#d5d5d5,#e4e4e4);border-radius:0 5px 5px 0;box-shadow:1px 1px 0 #8f8f8f,inset 0 1px 0 #f2f2f2"></div>
<svg class="i" style="left:1890px;top:636.5px" width="24" height="24" viewBox="0 0 24 24"><circle cx="12" cy="12" r="10" fill="#dfeafa" stroke="#8a8a9a" stroke-width="2"/><circle cx="12" cy="12" r="8" fill="#f8fbff" stroke="#b8c8e0" stroke-width=".8"/><path d="M12 5.500V12.500H17" stroke="#111" stroke-width="1.700" fill="none"/></svg>
<div class="b" style="left:1889px;top:670.5px;width:26px;height:39.5px;background:linear-gradient(90deg,#d5d5d5,#e4e4e4);border-radius:0 5px 5px 0;box-shadow:1px 1px 0 #8f8f8f,inset 0 1px 0 #f2f2f2"></div>
<svg class="i" style="left:1890px;top:678.25px" width="24" height="24" viewBox="0 0 24 24"><path d="M5 19L16 6" stroke="#8a8a8a" stroke-width="3"/><path d="M5 19L16 6" stroke="#e4e4e4" stroke-width="1.400"/><path d="M13 3.500L18 1.500L21 4L19 5L17.500 4L15.500 7Z" fill="#d8d8d8" stroke="#555" stroke-width=".8"/><path d="M3 14.500C5.500 12.500 9 14.500 8.500 17.500L14 20.500L12 22.500L6.500 20C4 21.500 1.500 19 3 14.500Z" fill="#c8c8c8" stroke="#555" stroke-width=".8"/><ellipse cx="5" cy="20.500" rx="2.800" ry="1.800" fill="#f0a020"/></svg>
<div class="b " style="left:0px;top:1020px;width:1920px;height:22px;background:linear-gradient(#f0f0f0 0,#dfdfdf 10%,#dcdcdc 40%,#e5e5e5 100%)"></div>
<div class="b " style="left:1797px;top:1021px;width:1px;height:20px;background:#cecece"></div>
<div class="b " style="left:1798px;top:1021px;width:1px;height:20px;background:#f6f6f6"></div>
<div class="b " style="left:1819px;top:1021px;width:1px;height:20px;background:#cecece"></div>
<div class="b " style="left:1820px;top:1021px;width:1px;height:20px;background:#f6f6f6"></div>
<div class="b " style="left:1901px;top:1021px;width:1px;height:20px;background:#cecece"></div>
<div class="b " style="left:1902px;top:1021px;width:1px;height:20px;background:#f6f6f6"></div>
<div class="b " style="left:898px;top:1021px;width:1px;height:20px;background:#cecece"></div>
<div class="b " style="left:899px;top:1021px;width:1px;height:20px;background:#f6f6f6"></div>
<svg class="i" style="left:1824.5px;top:1023px" width="15" height="15" viewBox="0 0 24 24"><path d="M1.200 1.500L6.500 23.500" stroke="#2a2aa0" stroke-width="1.700"/><path d="M2 3C6 .2 10 4.500 15 2.500S20 0 21.500 .5L24 13.500C21 12.500 19 15 15.500 15.500S9 13 5.200 16.500Z" fill="#fff" stroke="#111" stroke-width=".7"/><rect x="2.6" y="2.6" width="3.900" height="3.300" fill="#111"/><rect x="10.4" y="1.6" width="3.900" height="3.300" fill="#111"/><rect x="18.2" y="3.7" width="3.900" height="3.300" fill="#111"/><rect x="7.3" y="4.8" width="3.900" height="3.300" fill="#111"/><rect x="15.1" y="6.1" width="3.900" height="3.300" fill="#111"/><rect x="4.2" y="9.2" width="3.900" height="3.300" fill="#111"/><rect x="12.0" y="8.2" width="3.900" height="3.300" fill="#111"/><rect x="19.8" y="10.3" width="3.900" height="3.300" fill="#111"/><rect x="8.9" y="11.4" width="3.900" height="3.300" fill="#111"/><rect x="16.7" y="12.7" width="3.900" height="3.300" fill="#111"/></svg>
<svg class="i" style="left:1846px;top:1022.5px" width="16" height="16" viewBox="0 0 16 16"><path d="M1 4V1H4M12 1H15V4M15 12V15H12M4 15H1V12" fill="none" stroke="#fff" stroke-width="1.600"/><rect x="3.500" y="4" width="9" height="8" fill="#bcd8f8" stroke="#2a4a9a" stroke-width="1.200"/><rect x="4" y="4.500" width="8" height="1.800" fill="#2a4a9a"/></svg>
<svg class="i" style="left:1876px;top:1021.5px" width="17" height="17" viewBox="0 0 26 26"><defs><radialGradient id="nxg" cx=".62" cy=".5" r=".62"><stop offset="0" stop-color="#4af4ff"/><stop offset=".45" stop-color="#2aa8f0"/><stop offset=".8" stop-color="#1a56d8"/><stop offset="1" stop-color="#0c2a80"/></radialGradient></defs><circle cx="11.300" cy="13.400" r="9.600" fill="url(#nxg)"/><path d="M15.500 5.200C21 4.500 25.500 6.500 24.600 10.500C23 16 12 20.500 2.500 21.800" fill="none" stroke="#f2c860" stroke-width="2.100" stroke-linecap="round"/><path d="M1.500 22.300L5.500 21.200L4.800 23.500Z" fill="#f2c860" stroke="#f2c860" stroke-width="1"/><path d="M2 2.200L13.600 1.800L11.400 12.600Z" fill="#e0305c"/><path d="M2 2.200L13.600 1.800L9.500 5.500Z" fill="#f0608a"/></svg>
<div class="b" style="left:0;top:1041.700px;width:1920px;height:38.300px;background:linear-gradient(#1b3a5c 0,#1b3a5c 1px,#6e8db0 1px,#6e8db0 2px,#31547b 2px,#2c4f76 12%,#2a4c72 100%)"></div>
<svg class="i" style="left:13px;top:1032px" width="54" height="54" viewBox="0 0 54 54"><defs><radialGradient id="orb" cx=".5" cy=".98" r=".75"><stop offset="0" stop-color="#2fd6ff"/><stop offset=".35" stop-color="#1287d0"/><stop offset=".75" stop-color="#0b4f8e"/><stop offset="1" stop-color="#0d3f74"/></radialGradient><linearGradient id="orbt" x1="0" y1="0" x2="0" y2="1"><stop offset="0" stop-color="#c9d9e8"/><stop offset="1" stop-color="#6f93b6"/></linearGradient><linearGradient id="wr" x1="0" y1="0" x2="1" y2="1"><stop offset="0" stop-color="#e8481c"/><stop offset="1" stop-color="#f4a63a"/></linearGradient><linearGradient id="wg" x1="0" y1="0" x2="1" y2="1"><stop offset="0" stop-color="#9ccf4a"/><stop offset="1" stop-color="#4f9a2a"/></linearGradient><linearGradient id="wb" x1="0" y1="0" x2="1" y2="1"><stop offset="0" stop-color="#8fd2f6"/><stop offset="1" stop-color="#1f86d8"/></linearGradient><linearGradient id="wy" x1="0" y1="0" x2="1" y2="1"><stop offset="0" stop-color="#fbd84a"/><stop offset="1" stop-color="#f0a020"/></linearGradient></defs><circle cx="27" cy="27" r="25.500" fill="url(#orb)" stroke="#1b446e" stroke-width="1.200"/><path d="M2.200 25C3 10 14 1.800 27 1.800S51 10 51.800 25C43 20.500 35 27 27 23.500S11 21 2.200 25Z" fill="url(#orbt)" opacity=".88"/><circle cx="27" cy="27" r="24.300" fill="none" stroke="#9fc4e4" stroke-width=".9" opacity=".8"/><path d="M16 10.500C20 7.500 24.500 8 28.500 10.500L25.500 22.500C21.500 20 17.500 20 13.200 22.500Z" fill="url(#wr)"/><path d="M30.500 11.500C34.500 13.500 39 13.500 43.500 11L40.500 23.500C36.500 26 32 26 27.500 24Z" fill="url(#wg)"/><path d="M12.500 24.500C16.500 22 21 22 25 24.500L22 36.500C18 34 13.500 34 9.500 36.500Z" fill="url(#wb)"/><path d="M27 26C31 28 35.500 28 40 25.500L37 37.500C33 40 28.500 40 24 38Z" fill="url(#wy)"/></svg>
<svg class="i" style="left:100px;top:1049px" width="25" height="25" viewBox="0 0 25 25"><rect x="0" y="0" width="12" height="12" fill="#a8cdf0"/><rect x="12" y="0" width="12" height="12" fill="#b5dfae"/><rect x="0" y="12" width="12" height="12" fill="#f8d8a0"/><rect x="12" y="12" width="12" height="12" fill="#f6e4c8"/><path d="M1 1L12 12" stroke="#d8486a" stroke-width="2.200"/><circle cx="12" cy="12" r="2.600" fill="#e0281c"/><path d="M13.500 13.500V23L16 20.500L18 24.500L19.800 23.600L17.800 19.800H21Z" fill="#fff" stroke="#111" stroke-width=".9"/></svg>
<div class="b" style="left:140.500px;top:1043px;width:158.500px;height:37px;box-sizing:border-box;border:1px solid #d8e4ee;border-radius:3px;background:linear-gradient(#b9c7d5 0,#a3b4c6 45%,#8299b0 50%,#8fa5ba 100%);box-shadow:inset 0 0 0 1px rgba(255,255,255,.35)"></div>
<svg class="i" style="left:148px;top:1047px" width="28" height="28" viewBox="0 0 26 26"><defs><radialGradient id="nxg2" cx=".62" cy=".5" r=".62"><stop offset="0" stop-color="#4af4ff"/><stop offset=".45" stop-color="#2aa8f0"/><stop offset=".8" stop-color="#1a56d8"/><stop offset="1" stop-color="#0c2a80"/></radialGradient></defs><circle cx="11.300" cy="13.400" r="9.600" fill="url(#nxg2)"/><path d="M15.500 5.200C21 4.500 25.500 6.500 24.600 10.500C23 16 12 20.500 2.500 21.800" fill="none" stroke="#f2c860" stroke-width="2.100" stroke-linecap="round"/><path d="M1.500 22.300L5.500 21.200L4.800 23.500Z" fill="#f2c860" stroke="#f2c860" stroke-width="1"/><path d="M2 2.200L13.600 1.800L11.400 12.600Z" fill="#e0305c"/><path d="M2 2.200L13.600 1.800L9.500 5.500Z" fill="#f0608a"/></svg>
<div class="t" style="left:176.800px;top:1048.500px;font-size:19.300px;line-height:24px;color:#fff;letter-spacing:-.3px">NX 12.0.0.2...</div>
<div class="b" style="left:303px;top:1043px;width:158.500px;height:37px;box-sizing:border-box;border:1px solid #7f97b0;border-radius:3px;background:linear-gradient(#56789c 0,#456a90 45%,#335a82 50%,#3b6189 100%);box-shadow:inset 0 0 0 1px rgba(255,255,255,.12)"></div>
<svg class="i" style="left:311px;top:1049px" width="26" height="26" viewBox="0 0 26 26"><circle cx="13" cy="13" r="11.500" fill="#1a1a1a" stroke="#e8e8e8" stroke-width="2"/><circle cx="13" cy="13" r="7" fill="#e81c24"/></svg>
<div class="t" style="left:338px;top:1048.500px;font-size:19.500px;line-height:24px;color:#fff;letter-spacing:.1px">Bandicam</div>
<svg class="i" style="left:1667px;top:1049px" width="25" height="20" viewBox="0 0 25 20"><path d="M5 7C6 2 12 5 16 3.500S21 1 22.500 .5" fill="none" stroke="#8aa0b0" stroke-width="1.100"/><rect x="1" y="8" width="23" height="10.500" rx="1.200" fill="#d8dde2" stroke="#7a8894" stroke-width=".9"/><path d="M3 10.500H22M3 13H22M5.500 15.800H19.500" stroke="#5a6874" stroke-width="1.300" stroke-dasharray="1.800 1"/></svg>
<svg class="i" style="left:1719px;top:1061px" width="12" height="7" viewBox="0 0 12 7"><path d="M0 6.500H12L6 0Z" fill="#fff"/></svg>
<svg class="i" style="left:1755px;top:1049px" width="26" height="26" viewBox="0 0 26 26"><circle cx="13" cy="13" r="11.300" fill="#1a1a1a" stroke="#eee" stroke-width="2"/><circle cx="13" cy="13" r="6.500" fill="#ee1c24"/></svg>
<svg class="i" style="left:1792px;top:1050px" width="24" height="24" viewBox="0 0 24 24"><rect x="6.500" y="4" width="16" height="12" fill="#2a4668" stroke="#fff" stroke-width="1.800"/><path d="M14.500 16V20M9.500 21H20" stroke="#fff" stroke-width="2"/><rect x="1.500" y="1" width="3.800" height="7" rx="1" fill="none" stroke="#fff" stroke-width="1.300"/><path d="M3.400 8V21H8" fill="none" stroke="#fff" stroke-width="1.400"/></svg>
<div class="t" style="left:1840.300px;top:1049.500px;font-size:20px;line-height:24px;color:#fff;letter-spacing:-.3px">21:22</div>
<div class="b" style="left:1906.500px;top:1043px;width:13.500px;height:37px;background:linear-gradient(90deg,#6f8aa6,#3d5f83 30%,#33557a);box-shadow:inset 1px 0 0 #93a9c0,-1px 0 0 #1c3450"></div>
<div class="t" style="left:845px;top:978px;font-size:34.5px;line-height:38px;color:#e6725d;letter-spacing:2.9px;font-family:'Liberation Serif',serif;font-weight:500">杨明原创教程</div>
<div class="t" style="left:855px;top:1017.5px;font-size:19.5px;line-height:22px;color:#b458da;letter-spacing:2.5px;font-family:'Liberation Serif',serif">请支持原创 盗版必究</div>
</body></html>
